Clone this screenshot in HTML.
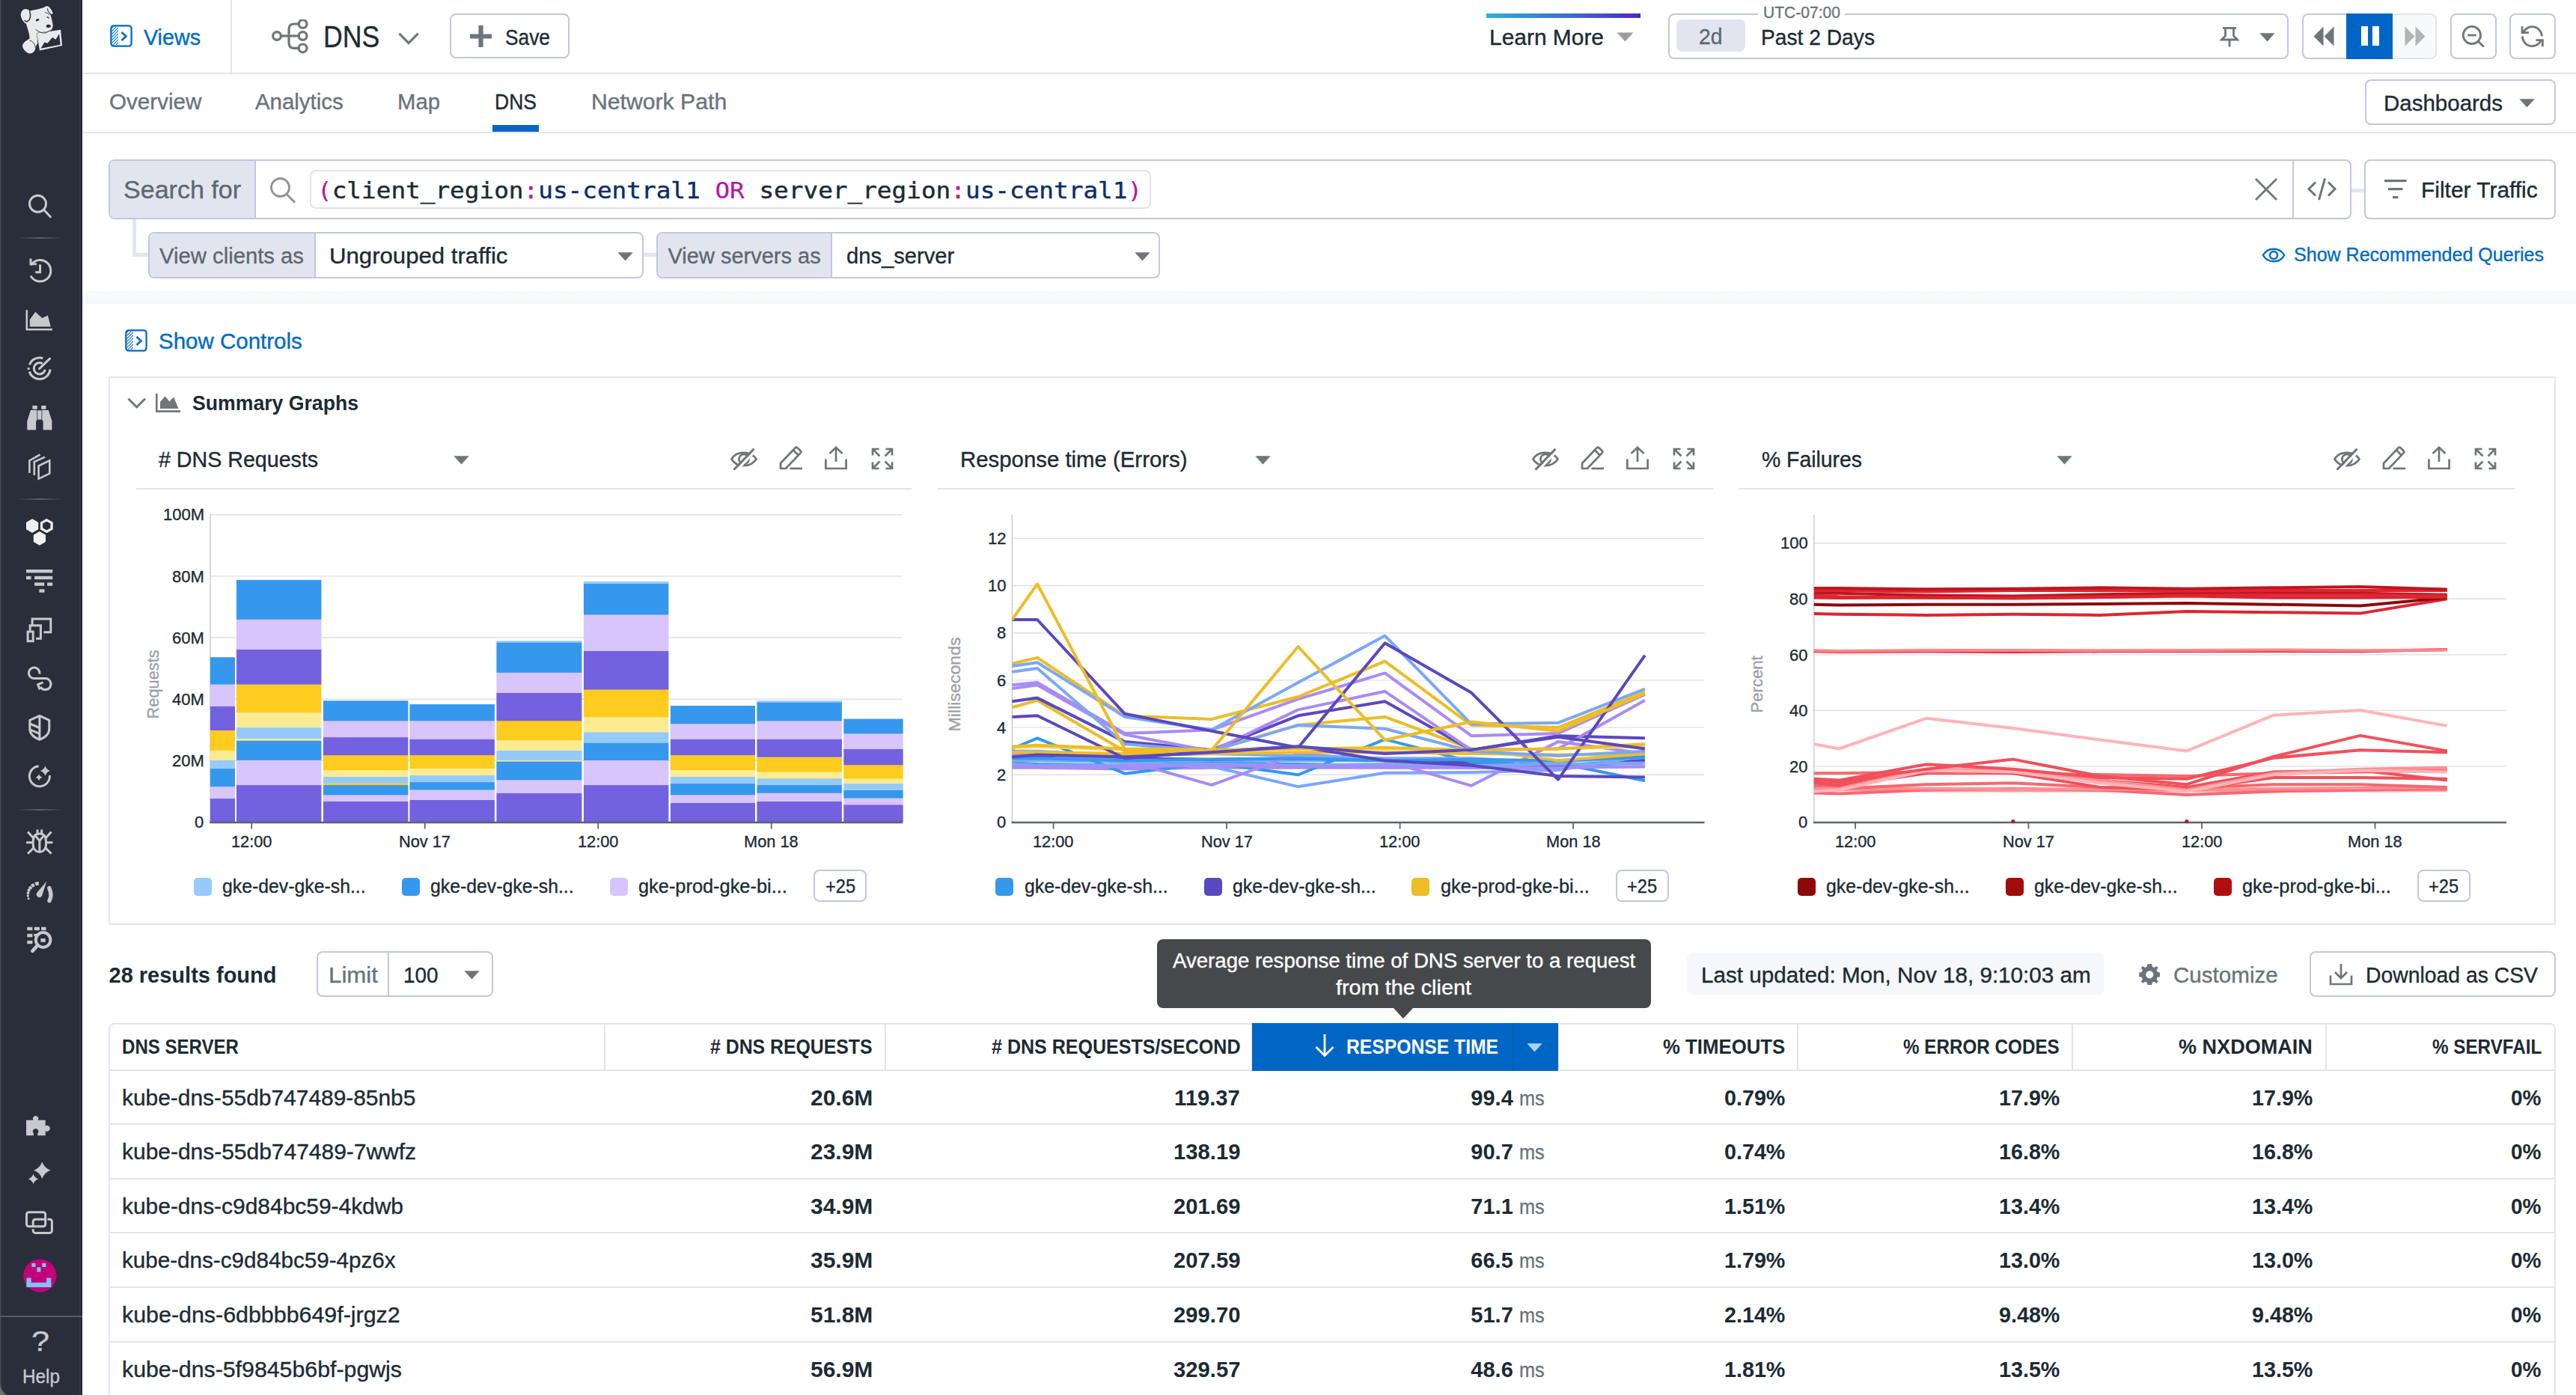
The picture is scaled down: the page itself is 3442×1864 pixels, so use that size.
<!DOCTYPE html>
<html lang="en"><head><meta charset="utf-8"><title>DNS | Datadog</title>
<style>
html,body{margin:0;padding:0}
body{width:3442px;height:1864px;position:relative;overflow:hidden;background:#fff;font-family:"Liberation Sans", sans-serif;color:#1c2b34}
.a{position:absolute;box-sizing:border-box}
.t{position:absolute;white-space:pre;line-height:1;transform-origin:0 50%}

</style></head>
<body>
<div class="a" style="left:0px;top:0px;width:110px;height:1864px;background:#2a2e3a;"></div>
<div class="a" style="left:105px;top:0px;width:5px;height:1864px;background:linear-gradient(90deg,rgba(255,255,255,0),rgba(255,255,255,.045) 30%,rgba(255,255,255,.045) 55%,rgba(0,0,0,.2) 66%,rgba(0,0,0,.22));"></div>
<svg class="a" style="left:20px;top:0px;" width="80" height="80" viewBox="0 0 1395 1395"><g fill="#e8e9eb">
<path d="M340 262 C420 225 560 225 680 170 C720 140 770 135 800 170 C850 220 880 280 885 320 C860 335 840 335 825 330 C850 420 875 500 882 590 C885 660 850 710 790 725 C760 760 700 775 640 762 L515 775 L530 1000 C500 1050 480 1100 470 1150 C450 1230 350 1270 290 1230 C200 1170 150 1080 190 1020 C220 970 280 940 340 900 C350 820 300 700 262 560 C200 520 140 440 135 350 C135 260 200 200 260 210 C300 215 330 240 340 262Z"/>
<path d="M510 775 L1065 695 L1100 1065 L575 1175Z" stroke="#2a2e3a" stroke-width="12" paint-order="stroke"/>
</g>
<g fill="#2a2e3a">
<path d="M600 1130 L690 985 L760 1005 L870 870 L950 920 L1030 790 L1058 1040Z"/>
<ellipse cx="525" cy="465" rx="42" ry="27" transform="rotate(-22 525 465)"/>
<ellipse cx="770" cy="408" rx="34" ry="14" transform="rotate(35 770 408)"/>
<ellipse cx="780" cy="608" rx="56" ry="38" transform="rotate(-8 780 608)"/>
</g>
<g fill="none" stroke="#2a2e3a" stroke-linecap="round">
<path d="M345 275 C378 380 352 470 292 498 C270 506 245 496 232 480" stroke-width="26"/>
<path d="M757 205 C765 262 792 302 838 330" stroke-width="20"/>
<path d="M700 288 C740 298 775 318 800 345" stroke-width="15"/>
<path d="M490 690 C540 742 620 772 700 766 C742 760 772 742 786 716" stroke-width="17"/>
<path d="M350 945 C420 958 462 1030 476 1100" stroke-width="17"/>
</g></svg>
<svg class="a" style="left:0px;top:0px;" width="110" height="1864" viewBox="0 0 110 1864"><g fill="none" stroke="#c8c9cc" stroke-width="3" stroke-linecap="butt" stroke-linejoin="miter"><circle cx="50.5" cy="272.3" r="11"/><path d="M58.5 280.3 L67.4 289.7" stroke-linecap="round"/><path d="M41.2 354.5 A14.3 14.3 0 1 1 41 368.6"/><path d="M41 345.4 V352.8 H48.9"/><path d="M53.6 353.6 V363.8 H47.3"/><path d="M35.8 414.3 V440.3 H69.9" stroke-width="2.6"/><path d="M39.8 436.4 V426.9 L47.3 416.7 L56.3 424.9 L63.9 421.4 L67.8 436.4Z" fill="#c8c9cc" stroke="none"/><path d="M39.5 487.4 A14.3 14.3 0 0 1 57.3 478.7"/><path d="M67.1 493.5 A14.3 14.3 0 0 1 39.2 496.5"/><circle cx="38.2" cy="492.6" r="1.7" fill="#c8c9cc" stroke="none"/><path d="M60.3 493.9 A7.6 7.6 0 1 1 56.7 485.7"/><path d="M52.6 492.6 L66.6 479.2" stroke-linecap="round"/><g fill="#c8c9cc" stroke="none"><rect x="43.4" y="542" width="6.3" height="4.8"/><rect x="55.2" y="542" width="6.3" height="4.8"/><path d="M41 548 H49.4 V561 L48.1 563.3 V574.4 H36.3 V562.5Z"/><path d="M56.3 548 H64.7 L69.4 562.5 V574.4 H57.6 V563.3 L56.3 561Z"/><rect x="50.2" y="548.3" width="5.3" height="12.3"/></g><g stroke-width="2.6"><path d="M51.6 622.5 L66.3 615.4 V632.7 L51.6 639.8Z"/><path d="M60 610.6 L45.8 617 V635"/><path d="M53.6 607.5 L39.4 615.4 V632"/></g></g><path d="M43.1 693.2 L51.2 697.9 L51.2 707.3 L43.1 712.0 L35.0 707.3 L35.0 697.9Z" fill="#f0f0f2"/><path d="M52.9 710.0 L61.0 714.7 L61.0 724.1 L52.9 728.8 L44.8 724.1 L44.8 714.7Z" fill="#f0f0f2"/><path d="M62.3 694.8 L69.1 698.7 L69.1 706.5 L62.3 710.4 L55.5 706.5 L55.5 698.7Z" fill="none" stroke="#f0f0f2" stroke-width="3.2"/><g fill="#c8c9cc"><rect x="35" y="761" width="35.2" height="4.4"/><rect x="35" y="769.8" width="6.5" height="4.4"/><rect x="46.1" y="769.8" width="24.1" height="4.4"/><rect x="46.1" y="778.4" width="13.1" height="4.4"/><rect x="63.1" y="778.4" width="7.1" height="4.4"/><rect x="52.4" y="787.3" width="7.1" height="4.4"/></g><g fill="none" stroke="#c8c9cc" stroke-width="3"><path d="M43.1 835.4 V827 H67.8 V844.8 H58.4"/><path d="M40.2 842.5 V835.8 H54.4 V853.2 H48.1"/><rect x="37.1" y="844" width="7.1" height="12.7"/><path d="M52.9 900.5 A7.3 7.3 0 1 0 45 906.6 H60.7 A7.5 7.5 0 1 1 54 917.8"/><path d="M57.5 911.8 L50.6 914.6 L53.2 921.4" stroke-linejoin="round"/><path d="M52.9 956.4 L65.8 962.3 V974 C65.8 981 60 985.5 52.9 988.3 C45.8 985.5 39.8 981 39.8 974 V962.3Z" stroke-linejoin="round"/><path d="M52.9 956.4 V988.3"/><path d="M39.8 967 L52.9 972.5 M39.8 974.9 L52.9 980.4"/><path d="M51.7 1023.8 A13.5 13.5 0 1 0 66.3 1036.0"/><path d="M60.4 1023.4999999999999 Q62.116 1028.384 67.0 1030.1 Q62.116 1031.8159999999998 60.4 1036.6999999999998 Q58.684 1031.8159999999998 53.8 1030.1 Q58.684 1028.384 60.4 1023.4999999999999Z" fill="#c8c9cc" stroke="none"/><path d="M52.1 1034.6 Q53.192 1037.7079999999999 56.300000000000004 1038.8 Q53.192 1039.892 52.1 1043.0 Q51.008 1039.892 47.9 1038.8 Q51.008 1037.7079999999999 52.1 1034.6Z" fill="#c8c9cc" stroke="none"/><path d="M44.2 1124 C44.2 1116.5 48 1113.9 52.9 1113.9 C57.8 1113.9 61.5 1116.5 61.5 1124 V1128 C61.5 1134.5 57.8 1138.4 52.9 1138.4 C48 1138.4 44.2 1134.5 44.2 1128Z"/><path d="M47 1116.6 L52.9 1123.4 L58.6 1116.6 M52.9 1123.4 V1137"/><path d="M50 1108.4 V1113.6 M55.7 1108.4 V1113.6"/><path d="M44.4 1119.6 L37.1 1111.5 M61.3 1119.6 L68.6 1111.5 M35 1125.7 H43.6 M62.1 1125.7 H70.4 M45.2 1132.6 L37.1 1140.7 M60.5 1132.6 L68.6 1140.7"/></g><circle cx="38.1" cy="1200.7" r="1.5" fill="#c8c9cc"/><circle cx="37.3" cy="1197.0" r="1.7" fill="#c8c9cc"/><circle cx="37.5" cy="1193.2" r="1.9" fill="#c8c9cc"/><circle cx="38.6" cy="1189.6" r="2.1" fill="#c8c9cc"/><circle cx="40.6" cy="1186.3" r="2.3" fill="#c8c9cc"/><path d="M42.5 1184.3 A15.6 15.6 0 0 1 45.6 1182.1" fill="none" stroke="#c8c9cc" stroke-width="4.6"/><path d="M47.1 1181.4 A15.6 15.6 0 0 1 51.8 1180.3" fill="none" stroke="#c8c9cc" stroke-width="4.8"/><path d="M65.8 1186.6 Q70 1196 66 1203.6" fill="none" stroke="#c8c9cc" stroke-width="5.4" stroke-linecap="round"/><path d="M62.3 1177.4 L56.6 1195.6 A4 4 0 1 1 49.6 1192.4Z" fill="#c8c9cc"/><g fill="#c8c9cc"><rect x="36.3" y="1238.7" width="7.1" height="4.4"/><rect x="45.8" y="1238.7" width="7.1" height="4.4"/><rect x="55.2" y="1238.7" width="6.3" height="4.4"/><rect x="36.3" y="1247.8" width="7.1" height="4.4"/><rect x="45.2" y="1247.8" width="4" height="3"/><rect x="36.3" y="1256.8" width="7.1" height="4.4"/><rect x="54.4" y="1254" width="6.3" height="4.8"/></g><circle cx="57.6" cy="1255.9" r="9.8" fill="none" stroke="#c8c9cc" stroke-width="4"/><path d="M49.6 1263.8 L43.4 1270.8" stroke="#c8c9cc" stroke-width="4.6" stroke-linecap="round"/><path d="M35 1496.8 H44.6 A3.6 3.6 0 1 1 50.6 1496.8 H60.7 V1504.6 A3.9 3.9 0 1 1 60.7 1511.2 V1517.3 H50.3 V1514.4 A3.7 3.7 0 1 0 44.9 1514.4 V1517.3 H35Z" fill="#c8c9cc"/><path d="M56.3 1552.6 Q59.211999999999996 1560.888 67.5 1563.8 Q59.211999999999996 1566.712 56.3 1575.0 Q53.388 1566.712 45.099999999999994 1563.8 Q53.388 1560.888 56.3 1552.6Z" fill="#c8c9cc"/><path d="M44.5 1568.8000000000002 Q46.216 1573.6840000000002 51.1 1575.4 Q46.216 1577.116 44.5 1582.0 Q42.784 1577.116 37.9 1575.4 Q42.784 1573.6840000000002 44.5 1568.8000000000002Z" fill="#c8c9cc"/><g fill="none" stroke="#c8c9cc" stroke-width="3"><rect x="35.5" y="1619.8" width="25.2" height="19" rx="3"/><path d="M63.5 1629.3 H66.4 A3 3 0 0 1 69.4 1632.3 V1644.4 A3 3 0 0 1 66.4 1647.4 H47.2 A3 3 0 0 1 44.2 1644.4 V1642.2"/><path d="M44.2 1638.8 V1632.3 A3 3 0 0 1 47.2 1629.3 H60.7"/></g><circle cx="53.4" cy="1704.6" r="22.2" fill="#c2007c"/><g fill="#7cc5f2"><rect x="42.4" y="1687.8" width="5.1" height="5.1"/><rect x="56.3" y="1687.8" width="5.1" height="5.1"/><rect x="49.3" y="1693.3" width="5.1" height="6.2"/><rect x="35.5" y="1707.5" width="6.2" height="12.5"/><rect x="62.1" y="1707.5" width="6.2" height="12.5"/><rect x="35.5" y="1713.8" width="32.8" height="6.2"/></g><path d="M0.6 0 V1848 A19.4 19.4 0 0 0 8.4 1864" fill="none" stroke="#4a4e5d" stroke-width="1.3"/><path d="M0 1848 A20 20 0 0 0 8 1864 L0 1864Z" fill="#6d7268"/></svg>
<div class="a" style="left:24px;top:316.8px;width:60px;height:2px;background:linear-gradient(90deg,rgba(255,255,255,0),rgba(255,255,255,.24) 50%,rgba(255,255,255,0));"></div>
<div class="a" style="left:24px;top:665.8px;width:60px;height:2px;background:linear-gradient(90deg,rgba(255,255,255,0),rgba(255,255,255,.24) 50%,rgba(255,255,255,0));"></div>
<div class="a" style="left:24px;top:1080.5px;width:60px;height:2px;background:linear-gradient(90deg,rgba(255,255,255,0),rgba(255,255,255,.24) 50%,rgba(255,255,255,0));"></div>
<div class="a" style="left:0px;top:1757.7px;width:110px;height:2px;background:#575a65;"></div>
<span class="t" style="left:42.48px;top:1773.50px;font-size:37.3px;color:#c8c9cc;-webkit-text-stroke:0.35px #c8c9cc;transform:scaleX(1.1583);">?</span>
<span class="t" style="left:30.30px;top:1826.90px;font-size:24.86px;color:#c8c9cc;-webkit-text-stroke:0.35px #c8c9cc;transform:scaleX(0.9777);">Help</span>
<div class="a" style="left:110px;top:97px;width:3332px;height:2px;background:#e3e4ee;"></div>
<svg class="a" style="left:147px;top:33px;" width="30" height="30" viewBox="0 0 30 30"><defs><clipPath id="pc147_33"><rect x="2.5" y="2.5" width="8.5" height="25"/></clipPath></defs>
<rect x="1.4" y="1.4" width="27.2" height="27.2" rx="3.5" fill="none" stroke="#006bc2" stroke-width="2.3"/>
<g clip-path="url(#pc147_33)" stroke="#006bc2" stroke-width="1.05"><path d="M-2 9 L14 -7 M-2 13 L14 -3 M-2 17 L14 1 M-2 21 L14 5 M-2 25 L14 9 M-2 29 L14 13 M-2 33 L14 17 M-2 37 L14 21 M-2 41 L14 25"/></g>
<path d="M15.5 10 L21.5 15.5 L15.5 21" fill="none" stroke="#006bc2" stroke-width="2.6"/></svg>
<span class="t" style="left:191.80px;top:36.00px;font-size:29.01px;color:#006bc2;-webkit-text-stroke:0.35px #006bc2;transform:scaleX(0.9890);">Views</span>
<div class="a" style="left:308px;top:0px;width:2px;height:97px;background:#e3e4ee;"></div>
<svg class="a" style="left:361px;top:26px;" width="52" height="48" viewBox="0 0 52 48"><g fill="none" stroke="#70757a" stroke-width="3.2">
<circle cx="9" cy="22" r="5.4"/><circle cx="43.6" cy="6" r="5.4"/><circle cx="43.6" cy="22" r="5.4"/><circle cx="43.6" cy="38.4" r="5.4"/>
<path d="M14.4 22 H38.2"/><path d="M38.2 6 H32 Q25 6 25 13 V31 Q25 38.4 32 38.4 H38.2"/></g></svg>
<span class="t" style="left:432.00px;top:27.50px;font-size:41.44px;color:#1c2b34;-webkit-text-stroke:0.35px #1c2b34;transform:scaleX(0.8606);">DNS</span>
<svg class="a" style="left:531px;top:42px;" width="30" height="20" viewBox="0 0 30 20"><path d="M2.5 2.8 L15 15.5 L27.5 2.8" fill="none" stroke="#70757a" stroke-width="3.2"/></svg>
<div class="a" style="left:601px;top:18px;width:160px;height:60px;background:#fff;border:2px solid #c3c7de;border-radius:8px;"></div>
<svg class="a" style="left:628px;top:34px;" width="29" height="29" viewBox="0 0 29 29"><path d="M14.5 0 V29 M0 14.5 H29" stroke="#70757a" stroke-width="6.2" fill="none"/></svg>
<span class="t" style="left:675.40px;top:35.50px;font-size:29.01px;color:#1c2b34;-webkit-text-stroke:0.35px #1c2b34;transform:scaleX(0.9076);">Save</span>
<div class="a" style="left:1986px;top:18px;width:206px;height:6px;background:linear-gradient(90deg,#2bb3d9,#3d6fd6 50%,#4a2bc3);"></div>
<span class="t" style="left:1989.50px;top:36.00px;font-size:29.01px;color:#1c2b34;-webkit-text-stroke:0.35px #1c2b34;transform:scaleX(1.0316);">Learn More</span>
<svg class="a" style="left:2160px;top:43px;" width="23" height="13" viewBox="0 0 23 13"><path d="M0.5 0.5 H22.5 L11.5 12.5 Z" fill="#9a9da1"/></svg>
<div class="a" style="left:2229px;top:18px;width:829px;height:61px;background:#fff;border:2px solid #c3c7de;border-radius:8px;"></div>
<div class="a" style="left:2349px;top:16px;width:116px;height:6px;background:#fff;"></div>
<span class="t" style="left:2355.50px;top:4.80px;font-size:22.79px;color:#6a737c;-webkit-text-stroke:0.35px #6a737c;transform:scaleX(0.9244);">UTC-07:00</span>
<div class="a" style="left:2240px;top:26px;width:92px;height:43px;background:#e2e5f0;border-radius:8px;"></div>
<span class="t" style="left:2270.00px;top:35.30px;font-size:29.01px;color:#5d6873;-webkit-text-stroke:0.35px #5d6873;transform:scaleX(0.9763);">2d</span>
<span class="t" style="left:2353.00px;top:36.00px;font-size:29.01px;color:#1c2b34;-webkit-text-stroke:0.35px #1c2b34;transform:scaleX(0.9722);">Past 2 Days</span>
<svg class="a" style="left:2966px;top:36px;" width="26" height="27" viewBox="0 0 26 27"><g fill="none" stroke="#70757a" stroke-width="2.8"><path d="M4 1.5 H22"/><path d="M7.5 1.5 V12 L2.5 17 H23.5 L18.5 12 V1.5"/><path d="M13 17 V26.5"/></g></svg>
<svg class="a" style="left:3019px;top:44px;" width="21" height="12" viewBox="0 0 21 12"><path d="M0.3 0.3 H20.7 L10.5 11.5 Z" fill="#70757a"/></svg>
<div class="a" style="left:3076px;top:18px;width:62px;height:61px;background:#fff;border:2px solid #c3c7de;border-radius:8px 0 0 8px;"></div>
<div class="a" style="left:3195px;top:18px;width:61px;height:61px;background:#f8f9fb;border:2px solid #e3e5ee;border-radius:0 8px 8px 0;"></div>
<div class="a" style="left:3135px;top:18px;width:62px;height:61px;background:#0066c6;"></div>
<svg class="a" style="left:3091px;top:35px;" width="28" height="27" viewBox="0 0 28 27"><path d="M13.5 0.5 V26.5 L0.5 13.5 Z M27.5 0.5 V26.5 L14.5 13.5 Z" fill="#70757a"/></svg>
<div class="a" style="left:3154.5px;top:35px;width:9px;height:26px;background:#fff;"></div>
<div class="a" style="left:3169.7px;top:35px;width:9px;height:26px;background:#fff;"></div>
<svg class="a" style="left:3213px;top:35px;" width="28" height="27" viewBox="0 0 28 27"><path d="M0.5 0.5 V26.5 L13.5 13.5 Z M14.5 0.5 V26.5 L27.5 13.5 Z" fill="#b1b4b8"/></svg>
<div class="a" style="left:3274px;top:18px;width:62px;height:61px;background:#fff;border:2px solid #c3c7de;border-radius:8px;"></div>
<svg class="a" style="left:3287px;top:32px;" width="36" height="36" viewBox="0 0 36 36"><g fill="none" stroke="#70757a" stroke-width="2.8"><circle cx="15.9" cy="15" r="11.6"/><path d="M10.2 15 H21.8"/><path d="M24.6 23.4 L31.8 30.6"/></g></svg>
<div class="a" style="left:3353px;top:18px;width:62px;height:61px;background:#fff;border:2px solid #c3c7de;border-radius:8px;"></div>
<svg class="a" style="left:3367px;top:32px;" width="34" height="34" viewBox="0 0 34 34"><g fill="none" stroke="#70757a" stroke-width="2.8"><path d="M4.2 12.2 A13 13 0 0 1 29.4 16.6"/><path d="M3.4 16.6 A13 13 0 0 0 28.2 22.1"/><path d="M3 3.2 V11.7 H11.9"/><path d="M21.4 21.6 H30.3 V30.2"/></g></svg>
<div class="a" style="left:110px;top:176px;width:3332px;height:2px;background:#e3e4ee;"></div>
<span class="t" style="left:146.10px;top:122.20px;font-size:29.01px;color:#6a737c;-webkit-text-stroke:0.35px #6a737c;transform:scaleX(1.0218);">Overview</span>
<span class="t" style="left:341.00px;top:122.20px;font-size:29.01px;color:#6a737c;-webkit-text-stroke:0.35px #6a737c;transform:scaleX(1.0142);">Analytics</span>
<span class="t" style="left:531.30px;top:122.20px;font-size:29.01px;color:#6a737c;-webkit-text-stroke:0.35px #6a737c;transform:scaleX(1.0102);">Map</span>
<span class="t" style="left:661.30px;top:122.20px;font-size:29.01px;color:#1c2b34;-webkit-text-stroke:0.35px #1c2b34;transform:scaleX(0.9145);">DNS</span>
<span class="t" style="left:789.80px;top:122.20px;font-size:29.01px;color:#6a737c;-webkit-text-stroke:0.35px #6a737c;transform:scaleX(1.0409);">Network Path</span>
<div class="a" style="left:658px;top:167px;width:62px;height:9px;background:#0a66c2;"></div>
<div class="a" style="left:3160px;top:106.3px;width:255px;height:60.7px;background:#fff;border:2px solid #c3c7de;border-radius:8px;"></div>
<span class="t" style="left:3185.00px;top:123.50px;font-size:29.01px;color:#1c2b34;-webkit-text-stroke:0.35px #1c2b34;transform:scaleX(1.0168);">Dashboards</span>
<svg class="a" style="left:3366px;top:132.3px;" width="21" height="12" viewBox="0 0 21 12"><path d="M0.3 0.3 H20.7 L10.5 11.5 Z" fill="#70757a"/></svg>
<div class="a" style="left:176.5px;top:292px;width:5px;height:50.5px;background:#e3e5f0;"></div>
<div class="a" style="left:176.5px;top:337.5px;width:23px;height:5px;background:#e3e5f0;"></div>
<div class="a" style="left:859px;top:337.5px;width:20px;height:5px;background:#e3e5f0;"></div>
<div class="a" style="left:3141px;top:251.5px;width:19px;height:5px;background:#e3e5f0;"></div>
<div class="a" style="left:145px;top:213px;width:2997px;height:80px;background:#fff;border:2px solid #c3c7de;border-radius:8px;"></div>
<div class="a" style="left:147px;top:215px;width:194px;height:76px;background:#e2e5f0;border-radius:6px 0 0 6px;"></div>
<div class="a" style="left:340px;top:215px;width:2px;height:76px;background:#c3c7de;"></div>
<span class="t" style="left:164.90px;top:237.00px;font-size:33.15px;color:#5d6873;-webkit-text-stroke:0.35px #5d6873;transform:scaleX(1.0269);">Search for</span>
<svg class="a" style="left:360px;top:236px;" width="37" height="36" viewBox="0 0 37 36"><g fill="none" stroke="#8e949a" stroke-width="2.8"><circle cx="14.5" cy="14.5" r="12"/><path d="M23 23.5 L34 34.5"/></g></svg>
<div class="a" style="left:414px;top:227px;width:1124px;height:52px;background:#fff;border:2px solid #e1e3ec;border-radius:8px;"></div>
<span class="t" style="left:423.5px;top:240px;font-size:30px;font-family:'DejaVu Sans Mono', 'Liberation Mono', monospace;transform:scaleX(1.0896);"><span style="color:#b5179e;-webkit-text-stroke:0.15px #b5179e">(</span><span style="color:#1c2b34;-webkit-text-stroke:0.4px #1c2b34">client_region</span><span style="color:#c2188f;-webkit-text-stroke:0.4px #c2188f">:</span><span style="color:#0b2d6b;-webkit-text-stroke:0.4px #0b2d6b">us-central1</span><span style="color:#1c2b34;-webkit-text-stroke:0.4px #1c2b34"> </span><span style="color:#b5179e;-webkit-text-stroke:0.15px #b5179e">OR</span><span style="color:#1c2b34;-webkit-text-stroke:0.4px #1c2b34"> </span><span style="color:#1c2b34;-webkit-text-stroke:0.4px #1c2b34">server_region</span><span style="color:#c2188f;-webkit-text-stroke:0.4px #c2188f">:</span><span style="color:#0b2d6b;-webkit-text-stroke:0.4px #0b2d6b">us-central1</span><span style="color:#b5179e;-webkit-text-stroke:0.15px #b5179e">)</span></span>
<svg class="a" style="left:3012px;top:237px;" width="32" height="32" viewBox="0 0 32 32"><path d="M2 2 L30 30 M30 2 L2 30" fill="none" stroke="#70757a" stroke-width="2.8"/></svg>
<div class="a" style="left:3063px;top:215px;width:2px;height:76px;background:#c3c7de;"></div>
<svg class="a" style="left:3082px;top:237px;" width="42" height="32" viewBox="0 0 42 32"><g fill="none" stroke="#70757a" stroke-width="3"><path d="M12 6.5 L3 15.5 L12 24.5"/><path d="M29 6.5 L38 15.5 L29 24.5"/><path d="M24.5 1.5 L16.5 30"/></g></svg>
<div class="a" style="left:3159px;top:213px;width:256px;height:80px;background:#fff;border:2px solid #c3c7de;border-radius:8px;"></div>
<svg class="a" style="left:3186px;top:240px;" width="30" height="26" viewBox="0 0 30 26"><g fill="#70757a"><rect x="0" y="0" width="29.5" height="3.2"/><rect x="5" y="11" width="19.5" height="3.2"/><rect x="11" y="22" width="7.5" height="3.2"/></g></svg>
<span class="t" style="left:3234.50px;top:239.60px;font-size:29.01px;color:#1c2b34;-webkit-text-stroke:0.35px #1c2b34;transform:scaleX(1.0316);">Filter Traffic</span>
<div class="a" style="left:198px;top:309.7px;width:662px;height:62px;background:#fff;border:2px solid #c3c7de;border-radius:8px;"></div>
<div class="a" style="left:200px;top:311.7px;width:221px;height:58px;background:#e2e5f0;border-radius:6px 0 0 6px;"></div>
<div class="a" style="left:420px;top:311.7px;width:2px;height:58px;background:#c3c7de;"></div>
<span class="t" style="left:213.00px;top:327.70px;font-size:29.01px;color:#5d6873;-webkit-text-stroke:0.35px #5d6873;transform:scaleX(1.0090);">View clients as</span>
<span class="t" style="left:440.00px;top:327.70px;font-size:29.01px;color:#1c2b34;-webkit-text-stroke:0.35px #1c2b34;transform:scaleX(1.0742);">Ungrouped traffic</span>
<svg class="a" style="left:825px;top:337px;" width="21" height="12" viewBox="0 0 21 12"><path d="M0.3 0.3 H20.7 L10.5 11.5 Z" fill="#70757a"/></svg>
<div class="a" style="left:877px;top:309.7px;width:673px;height:62px;background:#fff;border:2px solid #c3c7de;border-radius:8px;"></div>
<div class="a" style="left:879px;top:311.7px;width:232px;height:58px;background:#e2e5f0;border-radius:6px 0 0 6px;"></div>
<div class="a" style="left:1110px;top:311.7px;width:2px;height:58px;background:#c3c7de;"></div>
<span class="t" style="left:892.50px;top:327.70px;font-size:29.01px;color:#5d6873;-webkit-text-stroke:0.35px #5d6873;">View servers as</span>
<span class="t" style="left:1130.80px;top:327.70px;font-size:29.01px;color:#1c2b34;-webkit-text-stroke:0.35px #1c2b34;transform:scaleX(1.0051);">dns_server</span>
<svg class="a" style="left:1516px;top:337px;" width="21" height="12" viewBox="0 0 21 12"><path d="M0.3 0.3 H20.7 L10.5 11.5 Z" fill="#70757a"/></svg>
<svg class="a" style="left:3022px;top:329px;" width="32" height="24" viewBox="0 0 32 24"><g fill="none" stroke="#006bc2" stroke-width="2.5"><path d="M1.8 12 C8 1 24 1 30.2 12 C24 23 8 23 1.8 12 Z"/><circle cx="16" cy="12" r="5"/></g></svg>
<span class="t" style="left:3064.70px;top:328.30px;font-size:24.86px;color:#006bc2;-webkit-text-stroke:0.35px #006bc2;transform:scaleX(1.0072);">Show Recommended Queries</span>
<div class="a" style="left:110px;top:389px;width:3332px;height:17px;background:linear-gradient(180deg,#f9fafb,#f6f7f9);"></div>
<svg class="a" style="left:167px;top:439.5px;" width="30" height="30" viewBox="0 0 30 30"><defs><clipPath id="pc167_439"><rect x="2.5" y="2.5" width="8.5" height="25"/></clipPath></defs>
<rect x="1.4" y="1.4" width="27.2" height="27.2" rx="3.5" fill="none" stroke="#006bc2" stroke-width="2.3"/>
<g clip-path="url(#pc167_439)" stroke="#006bc2" stroke-width="1.05"><path d="M-2 9 L14 -7 M-2 13 L14 -3 M-2 17 L14 1 M-2 21 L14 5 M-2 25 L14 9 M-2 29 L14 13 M-2 33 L14 17 M-2 37 L14 21 M-2 41 L14 25"/></g>
<path d="M15.5 10 L21.5 15.5 L15.5 21" fill="none" stroke="#006bc2" stroke-width="2.6"/></svg>
<span class="t" style="left:212.40px;top:441.60px;font-size:29.01px;color:#006bc2;-webkit-text-stroke:0.35px #006bc2;transform:scaleX(1.0170);">Show Controls</span>
<div class="a" style="left:145px;top:503px;width:3270px;height:732.6px;background:#fff;border:2px solid #e3e4ee;"></div>
<svg class="a" style="left:169px;top:530px;" width="28" height="18" viewBox="0 0 28 18"><path d="M2.5 2.8 L13.7 14 L25 2.8" fill="none" stroke="#70757a" stroke-width="3"/></svg>
<svg class="a" style="left:208px;top:526px;" width="33" height="25" viewBox="0 0 33 25"><path d="M1.3 0 V23.6 H33" fill="none" stroke="#70757a" stroke-width="2.6"/><path d="M6 20 V11 L12.5 3.5 L18.5 10.5 L24 4.5 L30.5 20 Z" fill="#70757a"/></svg>
<span class="t" style="left:257.40px;top:525.70px;font-size:26.94px;color:#1c2b34;font-weight:700;transform:scaleX(0.9886);">Summary Graphs</span>
<span class="t" style="left:211.60px;top:599.50px;font-size:29.01px;color:#1c2b34;-webkit-text-stroke:0.35px #1c2b34;transform:scaleX(0.9870);"># DNS Requests</span>
<svg class="a" style="left:605.6px;top:608.5px;" width="21" height="12" viewBox="0 0 21 12"><path d="M0.3 0.3 H20.7 L10.5 11.5 Z" fill="#70757a"/></svg>
<svg class="a" style="left:974.6px;top:597px;" width="38" height="32" viewBox="0 0 38 32"><g fill="none" stroke="#70757a" stroke-width="2.7"><path d="M2.5 16.5 C9 5 28 5 35.5 16.5 C28 28 9 28 2.5 16.5 Z"/><circle cx="19" cy="16.5" r="6.6"/><path d="M8.2 32.6 L35.2 4.6" stroke="#fff" stroke-width="3.2"/><path d="M5.5 30.8 L32.5 2.8" stroke-width="3"/></g></svg>
<svg class="a" style="left:1039.6px;top:595px;" width="34" height="34" viewBox="0 0 34 34"><g fill="none" stroke="#70757a" stroke-width="2.7" stroke-linejoin="round"><path d="M3 24 L22.5 3.5 Q24 2 25.6 3.5 L29.5 7.2 Q31 8.8 29.5 10.4 L10 31 H3 Z"/><path d="M20 6.5 L27 13.5"/><path d="M15.5 31 H32"/></g></svg>
<svg class="a" style="left:1100.6px;top:595px;" width="32" height="34" viewBox="0 0 32 34"><g fill="none" stroke="#70757a" stroke-width="2.7"><path d="M16 22 V3.5"/><path d="M7.5 11 L16 2.8 L24.5 11"/><path d="M2.4 18.5 V31 H29.6 V18.5"/></g></svg>
<svg class="a" style="left:1163.6px;top:598px;" width="30" height="30" viewBox="0 0 30 30"><g fill="none" stroke="#70757a" stroke-width="2.7"><path d="M2 10.5 V2 H10.5 M2.5 2.5 L11.5 11.5"/><path d="M28 10.5 V2 H19.5 M27.5 2.5 L18.5 11.5"/><path d="M2 19.5 V28 H10.5 M2.5 27.5 L11.5 18.5"/><path d="M28 19.5 V28 H19.5 M27.5 27.5 L18.5 18.5"/></g></svg>
<div class="a" style="left:181.6px;top:651.8px;width:1036px;height:2px;background:#e3e4ee;"></div>
<span class="t" style="left:155.97px;top:903.11px;font-size:22.79px;color:#9b9fa4;-webkit-text-stroke:0.35px #9b9fa4;transform:rotate(-90deg) scaleX(0.9558);transform-origin:50% 50%;">Requests</span>
<span class="t" style="left:260.47px;top:1087.20px;font-size:22.79px;color:#1c2b34;-webkit-text-stroke:0.35px #1c2b34;transform:scaleX(0.9653);">0</span>
<span class="t" style="left:229.91px;top:1005.04px;font-size:22.79px;color:#1c2b34;-webkit-text-stroke:0.35px #1c2b34;transform:scaleX(0.9653);">20M</span>
<span class="t" style="left:229.91px;top:922.88px;font-size:22.79px;color:#1c2b34;-webkit-text-stroke:0.35px #1c2b34;transform:scaleX(0.9653);">40M</span>
<span class="t" style="left:229.91px;top:840.72px;font-size:22.79px;color:#1c2b34;-webkit-text-stroke:0.35px #1c2b34;transform:scaleX(0.9653);">60M</span>
<span class="t" style="left:229.91px;top:758.56px;font-size:22.79px;color:#1c2b34;-webkit-text-stroke:0.35px #1c2b34;transform:scaleX(0.9653);">80M</span>
<span class="t" style="left:217.68px;top:676.40px;font-size:22.79px;color:#1c2b34;-webkit-text-stroke:0.35px #1c2b34;transform:scaleX(0.9653);">100M</span>
<span class="t" style="left:308.96px;top:1113.00px;font-size:22.79px;color:#1c2b34;-webkit-text-stroke:0.35px #1c2b34;transform:scaleX(0.9556);">12:00</span>
<span class="t" style="left:533.21px;top:1113.00px;font-size:22.79px;color:#1c2b34;-webkit-text-stroke:0.35px #1c2b34;transform:scaleX(0.9556);">Nov 17</span>
<span class="t" style="left:771.96px;top:1113.00px;font-size:22.79px;color:#1c2b34;-webkit-text-stroke:0.35px #1c2b34;transform:scaleX(0.9556);">12:00</span>
<span class="t" style="left:994.39px;top:1113.00px;font-size:22.79px;color:#1c2b34;-webkit-text-stroke:0.35px #1c2b34;transform:scaleX(0.9556);">Mon 18</span>
<div class="a" style="left:258.9px;top:1173px;width:24px;height:24px;background:#95cbfb;border-radius:5px;"></div>
<span class="t" style="left:297.20px;top:1171.50px;font-size:25.9px;color:#1c2b34;-webkit-text-stroke:0.35px #1c2b34;transform:scaleX(0.9579);">gke-dev-gke-sh...</span>
<div class="a" style="left:537.2px;top:1173px;width:24px;height:24px;background:#3598ec;border-radius:5px;"></div>
<span class="t" style="left:575.20px;top:1171.50px;font-size:25.9px;color:#1c2b34;-webkit-text-stroke:0.35px #1c2b34;transform:scaleX(0.9579);">gke-dev-gke-sh...</span>
<div class="a" style="left:815px;top:1173px;width:24px;height:24px;background:#d6c5fb;border-radius:5px;"></div>
<span class="t" style="left:853.20px;top:1171.50px;font-size:25.9px;color:#1c2b34;-webkit-text-stroke:0.35px #1c2b34;transform:scaleX(0.9798);">gke-prod-gke-bi...</span>
<div class="a" style="left:1087.1px;top:1162px;width:71px;height:43px;background:#fff;border:2px solid #c3c7de;border-radius:8px;"></div>
<span class="t" style="left:1102.60px;top:1171.50px;font-size:25.9px;color:#1c2b34;-webkit-text-stroke:0.35px #1c2b34;transform:scaleX(0.9107);">+25</span>
<svg class="a" style="left:0px;top:0px;pointer-events:none;" width="3442" height="1864" viewBox="0 0 3442 1864"><path d="M281.0 1016.3 H1206.1" stroke="#dfe0e5" stroke-width="1.4"/><path d="M281.0 934.2 H1206.1" stroke="#dfe0e5" stroke-width="1.4"/><path d="M281.0 852.0 H1206.1" stroke="#dfe0e5" stroke-width="1.4"/><path d="M281.0 769.9 H1206.1" stroke="#dfe0e5" stroke-width="1.4"/><path d="M281.0 687.7 H1206.1" stroke="#dfe0e5" stroke-width="1.4"/><path d="M281.0 687.7 V1098.5" stroke="#c9cad0" stroke-width="1.4"/><rect x="280.9" y="1066.8" width="33.1" height="32.0" fill="#7361e0"/><rect x="280.9" y="1050.7" width="33.1" height="16.4" fill="#d7c5fb"/><rect x="280.9" y="1026.9" width="33.1" height="24.2" fill="#3598ec"/><rect x="280.9" y="1015.7" width="33.1" height="11.5" fill="#95cbfb"/><rect x="280.9" y="1002.5" width="33.1" height="13.5" fill="#fdeb92"/><rect x="280.9" y="975.7" width="33.1" height="27.1" fill="#fecb1f"/><rect x="280.9" y="943.5" width="33.1" height="32.5" fill="#7361e0"/><rect x="280.9" y="914.3" width="33.1" height="29.5" fill="#d7c5fb"/><rect x="280.9" y="878.2" width="33.1" height="36.4" fill="#3598ec"/><rect x="315.9" y="1048.8" width="113.5" height="50.0" fill="#7361e0"/><rect x="315.9" y="1015.7" width="113.5" height="33.4" fill="#d7c5fb"/><rect x="315.9" y="989.3" width="113.5" height="26.6" fill="#3598ec"/><rect x="315.9" y="986.9" width="113.5" height="2.7" fill="#fdeb92"/><rect x="315.9" y="971.8" width="113.5" height="15.4" fill="#95cbfb"/><rect x="315.9" y="951.8" width="113.5" height="20.3" fill="#fdeb92"/><rect x="315.9" y="914.3" width="113.5" height="37.8" fill="#fecb1f"/><rect x="315.9" y="867.5" width="113.5" height="47.1" fill="#7361e0"/><rect x="315.9" y="827.5" width="113.5" height="40.3" fill="#d7c5fb"/><rect x="315.9" y="774.9" width="113.5" height="52.9" fill="#3598ec"/><rect x="431.9" y="1070.7" width="113.5" height="28.1" fill="#7361e0"/><rect x="431.9" y="1061.9" width="113.5" height="9.1" fill="#d7c5fb"/><rect x="431.9" y="1048.8" width="113.5" height="13.5" fill="#3598ec"/><rect x="431.9" y="1046.4" width="113.5" height="2.7" fill="#fecb1f"/><rect x="431.9" y="1037.6" width="113.5" height="9.1" fill="#95cbfb"/><rect x="431.9" y="1028.8" width="113.5" height="9.1" fill="#fdeb92"/><rect x="431.9" y="1008.8" width="113.5" height="20.3" fill="#fecb1f"/><rect x="431.9" y="985.0" width="113.5" height="24.2" fill="#7361e0"/><rect x="431.9" y="963.0" width="113.5" height="22.2" fill="#d7c5fb"/><rect x="431.9" y="936.2" width="113.5" height="27.1" fill="#3598ec"/><rect x="547.4" y="1068.8" width="113.5" height="30.0" fill="#7361e0"/><rect x="547.4" y="1055.1" width="113.5" height="13.9" fill="#d7c5fb"/><rect x="547.4" y="1044.9" width="113.5" height="10.5" fill="#3598ec"/><rect x="547.4" y="1035.6" width="113.5" height="9.6" fill="#95cbfb"/><rect x="547.4" y="1026.9" width="113.5" height="9.1" fill="#fdeb92"/><rect x="547.4" y="1008.8" width="113.5" height="18.3" fill="#fecb1f"/><rect x="547.4" y="987.4" width="113.5" height="21.7" fill="#7361e0"/><rect x="547.4" y="963.0" width="113.5" height="24.7" fill="#d7c5fb"/><rect x="547.4" y="941.1" width="113.5" height="22.2" fill="#3598ec"/><rect x="663.4" y="1059.5" width="114.0" height="39.3" fill="#7361e0"/><rect x="663.4" y="1042.0" width="114.0" height="17.8" fill="#d7c5fb"/><rect x="663.4" y="1017.1" width="114.0" height="25.2" fill="#3598ec"/><rect x="663.4" y="1015.7" width="114.0" height="1.8" fill="#fdeb92"/><rect x="663.4" y="1002.5" width="114.0" height="13.5" fill="#95cbfb"/><rect x="663.4" y="988.8" width="114.0" height="13.9" fill="#fdeb92"/><rect x="663.4" y="963.0" width="114.0" height="26.1" fill="#fecb1f"/><rect x="663.4" y="925.5" width="114.0" height="37.8" fill="#7361e0"/><rect x="663.4" y="898.7" width="114.0" height="27.1" fill="#d7c5fb"/><rect x="663.4" y="858.2" width="114.0" height="40.7" fill="#3598ec"/><rect x="663.4" y="856.3" width="114.0" height="2.2" fill="#95cbfb"/><rect x="779.9" y="1048.8" width="113.5" height="50.0" fill="#7361e0"/><rect x="779.9" y="1015.7" width="113.5" height="33.4" fill="#d7c5fb"/><rect x="779.9" y="992.3" width="113.5" height="23.7" fill="#3598ec"/><rect x="779.9" y="978.1" width="113.5" height="14.4" fill="#95cbfb"/><rect x="779.9" y="958.1" width="113.5" height="20.3" fill="#fdeb92"/><rect x="779.9" y="921.1" width="113.5" height="37.3" fill="#fecb1f"/><rect x="779.9" y="869.5" width="113.5" height="52.0" fill="#7361e0"/><rect x="779.9" y="821.2" width="113.5" height="48.5" fill="#d7c5fb"/><rect x="779.9" y="779.8" width="113.5" height="41.7" fill="#3598ec"/><rect x="779.9" y="776.9" width="113.5" height="3.2" fill="#95cbfb"/><rect x="895.9" y="1072.7" width="113.1" height="26.1" fill="#7361e0"/><rect x="895.9" y="1061.9" width="113.1" height="11.0" fill="#d7c5fb"/><rect x="895.9" y="1046.8" width="113.1" height="15.4" fill="#3598ec"/><rect x="895.9" y="1037.6" width="113.1" height="9.6" fill="#95cbfb"/><rect x="895.9" y="1028.8" width="113.1" height="9.1" fill="#fdeb92"/><rect x="895.9" y="1008.8" width="113.1" height="20.3" fill="#fecb1f"/><rect x="895.9" y="987.4" width="113.1" height="21.7" fill="#7361e0"/><rect x="895.9" y="966.9" width="113.1" height="20.8" fill="#d7c5fb"/><rect x="895.9" y="943.0" width="113.1" height="24.2" fill="#3598ec"/><rect x="1011.4" y="1070.7" width="113.5" height="28.1" fill="#7361e0"/><rect x="1011.4" y="1059.5" width="113.5" height="11.5" fill="#d7c5fb"/><rect x="1011.4" y="1048.8" width="113.5" height="11.0" fill="#3598ec"/><rect x="1011.4" y="1040.0" width="113.5" height="9.1" fill="#95cbfb"/><rect x="1011.4" y="1031.2" width="113.5" height="9.1" fill="#fdeb92"/><rect x="1011.4" y="1011.3" width="113.5" height="20.3" fill="#fecb1f"/><rect x="1011.4" y="987.4" width="113.5" height="24.2" fill="#7361e0"/><rect x="1011.4" y="963.0" width="113.5" height="24.7" fill="#d7c5fb"/><rect x="1011.4" y="938.2" width="113.5" height="25.2" fill="#3598ec"/><rect x="1011.4" y="936.2" width="113.5" height="2.2" fill="#95cbfb"/><rect x="1127.3" y="1075.1" width="79.4" height="23.7" fill="#7361e0"/><rect x="1127.3" y="1066.3" width="79.4" height="9.1" fill="#d7c5fb"/><rect x="1127.3" y="1055.6" width="79.4" height="11.0" fill="#3598ec"/><rect x="1127.3" y="1046.8" width="79.4" height="9.1" fill="#95cbfb"/><rect x="1127.3" y="1040.0" width="79.4" height="7.1" fill="#fdeb92"/><rect x="1127.3" y="1022.0" width="79.4" height="18.3" fill="#fecb1f"/><rect x="1127.3" y="1000.5" width="79.4" height="21.7" fill="#7361e0"/><rect x="1127.3" y="980.1" width="79.4" height="20.8" fill="#d7c5fb"/><rect x="1127.3" y="960.6" width="79.4" height="19.8" fill="#3598ec"/><path d="M280.2 1099.0 H1206.1" stroke="#5c6370" stroke-width="2.4"/><path d="M336.2 1099.0 V1107.5" stroke="#5c6370" stroke-width="1.8"/><path d="M567.7 1099.0 V1107.5" stroke="#5c6370" stroke-width="1.8"/><path d="M799.2 1099.0 V1107.5" stroke="#5c6370" stroke-width="1.8"/><path d="M1030.7 1099.0 V1107.5" stroke="#5c6370" stroke-width="1.8"/></svg>
<span class="t" style="left:1283.00px;top:599.50px;font-size:29.01px;color:#1c2b34;-webkit-text-stroke:0.35px #1c2b34;transform:scaleX(1.0125);">Response time (Errors)</span>
<svg class="a" style="left:1677px;top:608.5px;" width="21" height="12" viewBox="0 0 21 12"><path d="M0.3 0.3 H20.7 L10.5 11.5 Z" fill="#70757a"/></svg>
<svg class="a" style="left:2046px;top:597px;" width="38" height="32" viewBox="0 0 38 32"><g fill="none" stroke="#70757a" stroke-width="2.7"><path d="M2.5 16.5 C9 5 28 5 35.5 16.5 C28 28 9 28 2.5 16.5 Z"/><circle cx="19" cy="16.5" r="6.6"/><path d="M8.2 32.6 L35.2 4.6" stroke="#fff" stroke-width="3.2"/><path d="M5.5 30.8 L32.5 2.8" stroke-width="3"/></g></svg>
<svg class="a" style="left:2111px;top:595px;" width="34" height="34" viewBox="0 0 34 34"><g fill="none" stroke="#70757a" stroke-width="2.7" stroke-linejoin="round"><path d="M3 24 L22.5 3.5 Q24 2 25.6 3.5 L29.5 7.2 Q31 8.8 29.5 10.4 L10 31 H3 Z"/><path d="M20 6.5 L27 13.5"/><path d="M15.5 31 H32"/></g></svg>
<svg class="a" style="left:2172px;top:595px;" width="32" height="34" viewBox="0 0 32 34"><g fill="none" stroke="#70757a" stroke-width="2.7"><path d="M16 22 V3.5"/><path d="M7.5 11 L16 2.8 L24.5 11"/><path d="M2.4 18.5 V31 H29.6 V18.5"/></g></svg>
<svg class="a" style="left:2235px;top:598px;" width="30" height="30" viewBox="0 0 30 30"><g fill="none" stroke="#70757a" stroke-width="2.7"><path d="M2 10.5 V2 H10.5 M2.5 2.5 L11.5 11.5"/><path d="M28 10.5 V2 H19.5 M27.5 2.5 L18.5 11.5"/><path d="M2 19.5 V28 H10.5 M2.5 27.5 L11.5 18.5"/><path d="M28 19.5 V28 H19.5 M27.5 27.5 L18.5 18.5"/></g></svg>
<div class="a" style="left:1253px;top:651.8px;width:1036px;height:2px;background:#e3e4ee;"></div>
<span class="t" style="left:1213.46px;top:903.11px;font-size:22.79px;color:#9b9fa4;-webkit-text-stroke:0.35px #9b9fa4;transform:rotate(-90deg) scaleX(1.0155);transform-origin:50% 50%;">Milliseconds</span>
<span class="t" style="left:1331.87px;top:1087.20px;font-size:22.79px;color:#1c2b34;-webkit-text-stroke:0.35px #1c2b34;transform:scaleX(0.9653);">0</span>
<span class="t" style="left:1331.87px;top:1024.00px;font-size:22.79px;color:#1c2b34;-webkit-text-stroke:0.35px #1c2b34;transform:scaleX(0.9653);">2</span>
<span class="t" style="left:1331.87px;top:960.80px;font-size:22.79px;color:#1c2b34;-webkit-text-stroke:0.35px #1c2b34;transform:scaleX(0.9653);">4</span>
<span class="t" style="left:1331.87px;top:897.60px;font-size:22.79px;color:#1c2b34;-webkit-text-stroke:0.35px #1c2b34;transform:scaleX(0.9653);">6</span>
<span class="t" style="left:1331.87px;top:834.40px;font-size:22.79px;color:#1c2b34;-webkit-text-stroke:0.35px #1c2b34;transform:scaleX(0.9653);">8</span>
<span class="t" style="left:1319.64px;top:771.20px;font-size:22.79px;color:#1c2b34;-webkit-text-stroke:0.35px #1c2b34;transform:scaleX(0.9653);">10</span>
<span class="t" style="left:1319.64px;top:708.00px;font-size:22.79px;color:#1c2b34;-webkit-text-stroke:0.35px #1c2b34;transform:scaleX(0.9653);">12</span>
<span class="t" style="left:1380.36px;top:1113.00px;font-size:22.79px;color:#1c2b34;-webkit-text-stroke:0.35px #1c2b34;transform:scaleX(0.9556);">12:00</span>
<span class="t" style="left:1604.61px;top:1113.00px;font-size:22.79px;color:#1c2b34;-webkit-text-stroke:0.35px #1c2b34;transform:scaleX(0.9556);">Nov 17</span>
<span class="t" style="left:1843.36px;top:1113.00px;font-size:22.79px;color:#1c2b34;-webkit-text-stroke:0.35px #1c2b34;transform:scaleX(0.9556);">12:00</span>
<span class="t" style="left:2065.79px;top:1113.00px;font-size:22.79px;color:#1c2b34;-webkit-text-stroke:0.35px #1c2b34;transform:scaleX(0.9556);">Mon 18</span>
<div class="a" style="left:1330.3px;top:1173px;width:24px;height:24px;background:#3598ec;border-radius:5px;"></div>
<span class="t" style="left:1368.60px;top:1171.50px;font-size:25.9px;color:#1c2b34;-webkit-text-stroke:0.35px #1c2b34;transform:scaleX(0.9579);">gke-dev-gke-sh...</span>
<div class="a" style="left:1608.6px;top:1173px;width:24px;height:24px;background:#5a48c0;border-radius:5px;"></div>
<span class="t" style="left:1646.60px;top:1171.50px;font-size:25.9px;color:#1c2b34;-webkit-text-stroke:0.35px #1c2b34;transform:scaleX(0.9579);">gke-dev-gke-sh...</span>
<div class="a" style="left:1886.4px;top:1173px;width:24px;height:24px;background:#ecbd27;border-radius:5px;"></div>
<span class="t" style="left:1924.60px;top:1171.50px;font-size:25.9px;color:#1c2b34;-webkit-text-stroke:0.35px #1c2b34;transform:scaleX(0.9798);">gke-prod-gke-bi...</span>
<div class="a" style="left:2158.5px;top:1162px;width:71px;height:43px;background:#fff;border:2px solid #c3c7de;border-radius:8px;"></div>
<span class="t" style="left:2174.00px;top:1171.50px;font-size:25.9px;color:#1c2b34;-webkit-text-stroke:0.35px #1c2b34;transform:scaleX(0.9107);">+25</span>
<svg class="a" style="left:0px;top:0px;pointer-events:none;" width="3442" height="1864" viewBox="0 0 3442 1864"><path d="M1352.4 1035.3 H2277.5" stroke="#dfe0e5" stroke-width="1.4"/><path d="M1352.4 972.1 H2277.5" stroke="#dfe0e5" stroke-width="1.4"/><path d="M1352.4 908.9 H2277.5" stroke="#dfe0e5" stroke-width="1.4"/><path d="M1352.4 845.7 H2277.5" stroke="#dfe0e5" stroke-width="1.4"/><path d="M1352.4 782.5 H2277.5" stroke="#dfe0e5" stroke-width="1.4"/><path d="M1352.4 719.3 H2277.5" stroke="#dfe0e5" stroke-width="1.4"/><path d="M1352.4 687.7 V1098.5" stroke="#c9cad0" stroke-width="1.4"/><polyline points="1352.4,1019.5 1386.0,1021.1 1503.0,1022.7 1619.0,1019.5 1734.5,1021.1 1850.5,1022.7 1965.9,1021.1 2081.9,1022.7 2197.9,1019.5" fill="none" stroke="#3598ec" stroke-width="4" stroke-linejoin="round"/><polyline points="1352.4,1016.3 1386.0,1016.3 1503.0,1017.9 1619.0,1016.3 1734.5,1016.3 1850.5,1016.3 1965.9,1017.9 2081.9,1016.3 2197.9,1014.8" fill="none" stroke="#7ba8f6" stroke-width="4" stroke-linejoin="round"/><polyline points="1352.4,1025.8 1386.0,1025.8 1503.0,1027.4 1619.0,1025.8 1734.5,1025.8 1850.5,1025.8 1965.9,1025.8 2081.9,1025.8 2197.9,1024.2" fill="none" stroke="#a88bf5" stroke-width="4" stroke-linejoin="round"/><polyline points="1352.4,1011.6 1386.0,1010.0 1503.0,1013.2 1619.0,1014.8 1734.5,1013.2 1850.5,1016.3 1965.9,1019.5 2081.9,1022.7 2197.9,1016.3" fill="none" stroke="#5a48c0" stroke-width="4" stroke-linejoin="round"/><polyline points="1352.4,1000.5 1386.0,986.3 1503.0,1033.7 1619.0,1019.5 1734.5,1035.3 1850.5,987.9 1965.9,1017.9 2081.9,1019.5 2197.9,1043.2" fill="none" stroke="#3598ec" stroke-width="4" stroke-linejoin="round"/><polyline points="1352.4,1006.9 1386.0,1006.9 1503.0,1019.5 1619.0,1024.2 1734.5,1051.1 1850.5,1032.8 1965.9,1032.1 2081.9,1029.0 2197.9,1010.0" fill="none" stroke="#7ba8f6" stroke-width="4" stroke-linejoin="round"/><polyline points="1352.4,1006.9 1386.0,1006.9 1503.0,1016.3 1619.0,1048.9 1734.5,1006.9 1850.5,1016.3 1965.9,1049.8 2081.9,991.1 2197.9,1006.9" fill="none" stroke="#a88bf5" stroke-width="4" stroke-linejoin="round"/><polyline points="1352.4,1003.7 1386.0,1003.7 1503.0,1010.0 1619.0,1006.9 1734.5,1010.0 1850.5,1013.2 1965.9,1013.2 2081.9,1019.5 2197.9,1003.7" fill="none" stroke="#7ba8f6" stroke-width="4" stroke-linejoin="round"/><polyline points="1352.4,1005.3 1386.0,1005.3 1503.0,1006.9 1619.0,1006.9 1734.5,1005.3 1850.5,1005.3 1965.9,1006.9 2081.9,1008.4 2197.9,1006.9" fill="none" stroke="#ecbd27" stroke-width="4" stroke-linejoin="round"/><polyline points="1352.4,999.0 1386.0,997.4 1503.0,1002.1 1619.0,1003.7 1734.5,1000.5 1850.5,1000.5 1965.9,1002.1 2081.9,1000.5 2197.9,997.4" fill="none" stroke="#f6d468" stroke-width="4" stroke-linejoin="round"/><polyline points="1352.4,1013.2 1386.0,1013.2 1503.0,1016.3 1619.0,1014.8 1734.5,1013.2 1850.5,1016.3 1965.9,1014.8 2081.9,1016.3 2197.9,1011.6" fill="none" stroke="#3598ec" stroke-width="4" stroke-linejoin="round"/><polyline points="1352.4,1021.1 1386.0,1022.7 1503.0,1022.7 1619.0,1021.1 1734.5,1022.7 1850.5,1021.1 1965.9,1022.7 2081.9,1021.1 2197.9,1019.5" fill="none" stroke="#7ba8f6" stroke-width="4" stroke-linejoin="round"/><polyline points="1352.4,1024.2 1386.0,1024.2 1503.0,1024.2 1619.0,1022.7 1734.5,1024.2 1850.5,1024.2 1965.9,1025.8 2081.9,1025.8 2197.9,1024.2" fill="none" stroke="#a88bf5" stroke-width="4" stroke-linejoin="round"/><polyline points="1352.4,957.9 1386.0,956.3 1503.0,1013.2 1619.0,1003.7 1734.5,997.4 1850.5,1016.3 1965.9,1022.7 2081.9,1036.9 2197.9,1038.5" fill="none" stroke="#5a48c0" stroke-width="4" stroke-linejoin="round"/><polyline points="1352.4,945.2 1386.0,935.8 1503.0,1003.7 1619.0,1002.1 1734.5,968.9 1850.5,957.9 1965.9,1000.5 2081.9,1016.3 2197.9,1006.9" fill="none" stroke="#ecbd27" stroke-width="4" stroke-linejoin="round"/><polyline points="1352.4,937.3 1386.0,932.6 1503.0,991.1 1619.0,1002.1 1734.5,956.3 1850.5,937.3 1965.9,1002.1 2081.9,983.2 2197.9,986.3" fill="none" stroke="#5a48c0" stroke-width="4" stroke-linejoin="round"/><polyline points="1352.4,920.0 1386.0,915.2 1503.0,981.6 1619.0,1003.7 1734.5,948.4 1850.5,923.8 1965.9,1002.1 2081.9,1000.5 2197.9,935.8" fill="none" stroke="#a88bf5" stroke-width="4" stroke-linejoin="round"/><polyline points="1352.4,915.2 1386.0,912.1 1503.0,980.0 1619.0,975.3 1734.5,934.2 1850.5,899.4 1965.9,983.2 2081.9,980.0 2197.9,927.9" fill="none" stroke="#a88bf5" stroke-width="4" stroke-linejoin="round"/><polyline points="1352.4,897.8 1386.0,893.1 1503.0,994.2 1619.0,1003.7 1734.5,968.9 1850.5,973.7 1965.9,1003.7 2081.9,1010.0 2197.9,1003.7" fill="none" stroke="#7ba8f6" stroke-width="4" stroke-linejoin="round"/><polyline points="1352.4,886.8 1386.0,878.9 1503.0,956.3 1619.0,961.0 1734.5,931.0 1850.5,883.6 1965.9,968.9 2081.9,972.1 2197.9,924.7" fill="none" stroke="#ecbd27" stroke-width="4" stroke-linejoin="round"/><polyline points="1352.4,889.9 1386.0,885.2 1503.0,957.9 1619.0,975.3 1734.5,912.1 1850.5,849.5 1965.9,967.4 2081.9,965.8 2197.9,920.6" fill="none" stroke="#7ba8f6" stroke-width="4" stroke-linejoin="round"/><polyline points="1352.4,828.0 1386.0,828.0 1503.0,953.8 1619.0,976.8 1734.5,999.0 1850.5,859.3 1965.9,925.6 2081.9,1041.6 2197.9,875.7" fill="none" stroke="#5a48c0" stroke-width="4" stroke-linejoin="round"/><polyline points="1352.4,828.0 1386.0,780.3 1503.0,1001.2 1619.0,1002.4 1734.5,864.0 1850.5,988.8 1965.9,964.5 2081.9,976.8 2197.9,926.6" fill="none" stroke="#ecbd27" stroke-width="4" stroke-linejoin="round"/><polyline points="1352.4,997.4 1386.0,995.8 1503.0,1000.5 1619.0,1002.1 1734.5,1000.5 1850.5,999.0 1965.9,1002.1 2081.9,1000.5 2197.9,994.2" fill="none" stroke="#ecbd27" stroke-width="4" stroke-linejoin="round"/><polyline points="1352.4,1011.6 1386.0,1008.4 1503.0,1011.6 1619.0,1005.3 1734.5,997.4 1850.5,1006.9 1965.9,1002.1 2081.9,984.7 2197.9,1000.5" fill="none" stroke="#5a48c0" stroke-width="4" stroke-linejoin="round"/><path d="M1351.6 1099.0 H2277.5" stroke="#5c6370" stroke-width="2.4"/><path d="M1407.6 1099.0 V1107.5" stroke="#5c6370" stroke-width="1.8"/><path d="M1639.1 1099.0 V1107.5" stroke="#5c6370" stroke-width="1.8"/><path d="M1870.6 1099.0 V1107.5" stroke="#5c6370" stroke-width="1.8"/><path d="M2102.1 1099.0 V1107.5" stroke="#5c6370" stroke-width="1.8"/></svg>
<span class="t" style="left:2354.40px;top:599.50px;font-size:29.01px;color:#1c2b34;-webkit-text-stroke:0.35px #1c2b34;transform:scaleX(0.9781);">% Failures</span>
<svg class="a" style="left:2748.4px;top:608.5px;" width="21" height="12" viewBox="0 0 21 12"><path d="M0.3 0.3 H20.7 L10.5 11.5 Z" fill="#70757a"/></svg>
<svg class="a" style="left:3117.4px;top:597px;" width="38" height="32" viewBox="0 0 38 32"><g fill="none" stroke="#70757a" stroke-width="2.7"><path d="M2.5 16.5 C9 5 28 5 35.5 16.5 C28 28 9 28 2.5 16.5 Z"/><circle cx="19" cy="16.5" r="6.6"/><path d="M8.2 32.6 L35.2 4.6" stroke="#fff" stroke-width="3.2"/><path d="M5.5 30.8 L32.5 2.8" stroke-width="3"/></g></svg>
<svg class="a" style="left:3182.4px;top:595px;" width="34" height="34" viewBox="0 0 34 34"><g fill="none" stroke="#70757a" stroke-width="2.7" stroke-linejoin="round"><path d="M3 24 L22.5 3.5 Q24 2 25.6 3.5 L29.5 7.2 Q31 8.8 29.5 10.4 L10 31 H3 Z"/><path d="M20 6.5 L27 13.5"/><path d="M15.5 31 H32"/></g></svg>
<svg class="a" style="left:3243.4px;top:595px;" width="32" height="34" viewBox="0 0 32 34"><g fill="none" stroke="#70757a" stroke-width="2.7"><path d="M16 22 V3.5"/><path d="M7.5 11 L16 2.8 L24.5 11"/><path d="M2.4 18.5 V31 H29.6 V18.5"/></g></svg>
<svg class="a" style="left:3306.4px;top:598px;" width="30" height="30" viewBox="0 0 30 30"><g fill="none" stroke="#70757a" stroke-width="2.7"><path d="M2 10.5 V2 H10.5 M2.5 2.5 L11.5 11.5"/><path d="M28 10.5 V2 H19.5 M27.5 2.5 L18.5 11.5"/><path d="M2 19.5 V28 H10.5 M2.5 27.5 L11.5 18.5"/><path d="M28 19.5 V28 H19.5 M27.5 27.5 L18.5 18.5"/></g></svg>
<div class="a" style="left:2324.4px;top:651.8px;width:1036px;height:2px;background:#e3e4ee;"></div>
<span class="t" style="left:2307.64px;top:903.11px;font-size:22.79px;color:#9b9fa4;-webkit-text-stroke:0.35px #9b9fa4;transform:rotate(-90deg) scaleX(0.9680);transform-origin:50% 50%;">Percent</span>
<span class="t" style="left:2403.27px;top:1087.20px;font-size:22.79px;color:#1c2b34;-webkit-text-stroke:0.35px #1c2b34;transform:scaleX(0.9653);">0</span>
<span class="t" style="left:2391.04px;top:1012.64px;font-size:22.79px;color:#1c2b34;-webkit-text-stroke:0.35px #1c2b34;transform:scaleX(0.9653);">20</span>
<span class="t" style="left:2391.04px;top:938.08px;font-size:22.79px;color:#1c2b34;-webkit-text-stroke:0.35px #1c2b34;transform:scaleX(0.9653);">40</span>
<span class="t" style="left:2391.04px;top:863.52px;font-size:22.79px;color:#1c2b34;-webkit-text-stroke:0.35px #1c2b34;transform:scaleX(0.9653);">60</span>
<span class="t" style="left:2391.04px;top:788.96px;font-size:22.79px;color:#1c2b34;-webkit-text-stroke:0.35px #1c2b34;transform:scaleX(0.9653);">80</span>
<span class="t" style="left:2378.81px;top:714.40px;font-size:22.79px;color:#1c2b34;-webkit-text-stroke:0.35px #1c2b34;transform:scaleX(0.9653);">100</span>
<span class="t" style="left:2451.76px;top:1113.00px;font-size:22.79px;color:#1c2b34;-webkit-text-stroke:0.35px #1c2b34;transform:scaleX(0.9556);">12:00</span>
<span class="t" style="left:2676.01px;top:1113.00px;font-size:22.79px;color:#1c2b34;-webkit-text-stroke:0.35px #1c2b34;transform:scaleX(0.9556);">Nov 17</span>
<span class="t" style="left:2914.76px;top:1113.00px;font-size:22.79px;color:#1c2b34;-webkit-text-stroke:0.35px #1c2b34;transform:scaleX(0.9556);">12:00</span>
<span class="t" style="left:3137.19px;top:1113.00px;font-size:22.79px;color:#1c2b34;-webkit-text-stroke:0.35px #1c2b34;transform:scaleX(0.9556);">Mon 18</span>
<div class="a" style="left:2401.7px;top:1173px;width:24px;height:24px;background:#8e0a0a;border-radius:5px;"></div>
<span class="t" style="left:2440.00px;top:1171.50px;font-size:25.9px;color:#1c2b34;-webkit-text-stroke:0.35px #1c2b34;transform:scaleX(0.9579);">gke-dev-gke-sh...</span>
<div class="a" style="left:2680px;top:1173px;width:24px;height:24px;background:#a00c0c;border-radius:5px;"></div>
<span class="t" style="left:2718.00px;top:1171.50px;font-size:25.9px;color:#1c2b34;-webkit-text-stroke:0.35px #1c2b34;transform:scaleX(0.9579);">gke-dev-gke-sh...</span>
<div class="a" style="left:2957.8px;top:1173px;width:24px;height:24px;background:#b00f10;border-radius:5px;"></div>
<span class="t" style="left:2996.00px;top:1171.50px;font-size:25.9px;color:#1c2b34;-webkit-text-stroke:0.35px #1c2b34;transform:scaleX(0.9798);">gke-prod-gke-bi...</span>
<div class="a" style="left:3229.9px;top:1162px;width:71px;height:43px;background:#fff;border:2px solid #c3c7de;border-radius:8px;"></div>
<span class="t" style="left:3245.40px;top:1171.50px;font-size:25.9px;color:#1c2b34;-webkit-text-stroke:0.35px #1c2b34;transform:scaleX(0.9107);">+25</span>
<svg class="a" style="left:0px;top:0px;pointer-events:none;" width="3442" height="1864" viewBox="0 0 3442 1864"><path d="M2423.8 1023.9 H3348.9" stroke="#dfe0e5" stroke-width="1.4"/><path d="M2423.8 949.4 H3348.9" stroke="#dfe0e5" stroke-width="1.4"/><path d="M2423.8 874.8 H3348.9" stroke="#dfe0e5" stroke-width="1.4"/><path d="M2423.8 800.3 H3348.9" stroke="#dfe0e5" stroke-width="1.4"/><path d="M2423.8 725.7 H3348.9" stroke="#dfe0e5" stroke-width="1.4"/><path d="M2423.8 687.7 V1098.5" stroke="#c9cad0" stroke-width="1.4"/><polyline points="2423.8,1055.6 2457.4,1055.6 2573.9,1056.4 2689.9,1056.7 2805.9,1056.7 2921.9,1056.4 3037.8,1056.7 3153.8,1056.4 3269.8,1056.4" fill="none" stroke="#ffb4b6" stroke-width="4" stroke-linejoin="round"/><polyline points="2423.8,1053.8 2457.4,1054.5 2573.9,1055.3 2689.9,1055.6 2805.9,1055.6 2921.9,1055.6 3037.8,1055.6 3153.8,1055.3 3269.8,1055.3" fill="none" stroke="#fa9096" stroke-width="4" stroke-linejoin="round"/><polyline points="2423.8,1059.4 2457.4,1060.5 2573.9,1055.6 2689.9,1053.8 2805.9,1055.6 2921.9,1062.0 3037.8,1057.5 3153.8,1055.6 3269.8,1053.8" fill="none" stroke="#f5686f" stroke-width="4" stroke-linejoin="round"/><polyline points="2423.8,1051.9 2457.4,1052.6 2573.9,1053.8 2689.9,1054.5 2805.9,1054.5 2921.9,1055.6 3037.8,1053.8 3153.8,1053.0 3269.8,1052.3" fill="none" stroke="#fa9096" stroke-width="4" stroke-linejoin="round"/><polyline points="2423.8,1050.0 2457.4,1053.8 2573.9,1048.2 2689.9,1046.3 2805.9,1051.9 2921.9,1053.0 3037.8,1048.2 3153.8,1048.2 3269.8,1051.9" fill="none" stroke="#f5686f" stroke-width="4" stroke-linejoin="round"/><polyline points="2423.8,1046.3 2457.4,1050.0 2573.9,1033.3 2689.9,1033.3 2805.9,1051.9 2921.9,1055.6 3037.8,1038.9 3153.8,1038.9 3269.8,1040.7" fill="none" stroke="#f0505b" stroke-width="4" stroke-linejoin="round"/><polyline points="2423.8,1033.3 2457.4,1033.3 2573.9,1031.4 2689.9,1033.3 2805.9,1035.1 2921.9,1037.0 3037.8,1033.3 3153.8,1031.4 3269.8,1029.5" fill="none" stroke="#f5686f" stroke-width="4" stroke-linejoin="round"/><polyline points="2423.8,1042.6 2457.4,1046.3 2573.9,1029.5 2689.9,1033.3 2805.9,1042.6 2921.9,1051.9 3037.8,1031.4 3153.8,1029.5 3269.8,1042.6" fill="none" stroke="#f0505b" stroke-width="4" stroke-linejoin="round"/><polyline points="2423.8,1053.8 2457.4,1053.8 2573.9,1027.7 2689.9,1029.5 2805.9,1042.6 2921.9,1055.6 3037.8,1033.3 3153.8,1027.7 3269.8,1025.8" fill="none" stroke="#fa9096" stroke-width="4" stroke-linejoin="round"/><polyline points="2423.8,1057.5 2457.4,1055.6 2573.9,1029.5 2689.9,1031.4 2805.9,1046.3 2921.9,1057.5 3037.8,1035.1 3153.8,1029.5 3269.8,1031.4" fill="none" stroke="#ffb4b6" stroke-width="4" stroke-linejoin="round"/><polyline points="2423.8,1040.7 2457.4,1042.6 2573.9,1021.3 2689.9,1027.7 2805.9,1038.9 2921.9,1040.7 3037.8,1012.8 3153.8,1002.3 3269.8,1005.3" fill="none" stroke="#f0505b" stroke-width="4" stroke-linejoin="round"/><polyline points="2423.8,1044.4 2457.4,1044.4 2573.9,1027.7 2689.9,1014.6 2805.9,1037.0 2921.9,1048.2 3037.8,1010.9 3153.8,982.9 3269.8,1003.4" fill="none" stroke="#f0505b" stroke-width="4" stroke-linejoin="round"/><polyline points="2423.8,994.1 2457.4,1000.5 2573.9,959.8 2689.9,972.9 2805.9,988.5 2921.9,1003.4 3037.8,955.7 3153.8,949.0 3269.8,969.9" fill="none" stroke="#ffb4b6" stroke-width="4" stroke-linejoin="round"/><polyline points="2423.8,870.3 2457.4,871.1 2573.9,870.3 2689.9,871.1 2805.9,870.3 2921.9,870.0 3037.8,870.0 3153.8,870.3 3269.8,868.1" fill="none" stroke="#dc2632" stroke-width="4" stroke-linejoin="round"/><polyline points="2423.8,869.2 2457.4,870.0 2573.9,868.9 2689.9,868.9 2805.9,869.2 2921.9,868.9 3037.8,868.5 3153.8,869.2 3269.8,868.5" fill="none" stroke="#f9868c" stroke-width="4" stroke-linejoin="round"/><polyline points="2423.8,820.0 2457.4,820.8 2573.9,821.9 2689.9,820.8 2805.9,821.9 2921.9,817.0 3037.8,818.2 3153.8,819.6 3269.8,800.3" fill="none" stroke="#dc2632" stroke-width="4" stroke-linejoin="round"/><polyline points="2423.8,807.7 2457.4,808.5 2573.9,807.7 2689.9,807.7 2805.9,807.0 2921.9,805.9 3037.8,807.7 3153.8,809.6 3269.8,798.4" fill="none" stroke="#8a0a0c" stroke-width="4" stroke-linejoin="round"/><polyline points="2423.8,798.4 2457.4,799.1 2573.9,798.4 2689.9,799.5 2805.9,798.0 2921.9,796.5 3037.8,798.4 3153.8,798.4 3269.8,797.7" fill="none" stroke="#dc2632" stroke-width="4" stroke-linejoin="round"/><polyline points="2423.8,792.8 2457.4,792.8 2573.9,795.4 2689.9,796.5 2805.9,794.3 2921.9,792.8 3037.8,792.8 3153.8,792.8 3269.8,794.7" fill="none" stroke="#c0151c" stroke-width="4" stroke-linejoin="round"/><polyline points="2423.8,789.1 2457.4,789.1 2573.9,790.6 2689.9,789.1 2805.9,789.1 2921.9,789.8 3037.8,789.1 3153.8,789.1 3269.8,789.1" fill="none" stroke="#dc2632" stroke-width="4" stroke-linejoin="round"/><polyline points="2423.8,786.1 2457.4,786.1 2573.9,787.2 2689.9,786.8 2805.9,785.3 2921.9,786.8 3037.8,785.3 3153.8,783.9 3269.8,787.6" fill="none" stroke="#c0151c" stroke-width="4" stroke-linejoin="round"/><polyline points="2423.8,795.8 2457.4,797.3 2573.9,798.8 2689.9,799.1 2805.9,797.7 2921.9,795.8 3037.8,794.7 3153.8,794.7 3269.8,796.5" fill="none" stroke="#dc2632" stroke-width="4" stroke-linejoin="round"/><path d="M2423.0 1099.0 H3348.9" stroke="#5c6370" stroke-width="2.4"/><path d="M2479.0 1099.0 V1107.5" stroke="#5c6370" stroke-width="1.8"/><path d="M2710.5 1099.0 V1107.5" stroke="#5c6370" stroke-width="1.8"/><path d="M2942.0 1099.0 V1107.5" stroke="#5c6370" stroke-width="1.8"/><path d="M3173.5 1099.0 V1107.5" stroke="#5c6370" stroke-width="1.8"/><circle cx="2689.9" cy="1097.5" r="2.6" fill="#c0151c"/><circle cx="2921.9" cy="1097.5" r="2.6" fill="#c0151c"/></svg>
<span class="t" style="left:145.50px;top:1288.80px;font-size:29.01px;color:#1c2b34;font-weight:700;">28 results found</span>
<div class="a" style="left:423px;top:1270.5px;width:236px;height:61px;background:#fff;border:2px solid #c3c7de;border-radius:8px;"></div>
<div class="a" style="left:517.6px;top:1272.5px;width:2px;height:57px;background:#c3c7de;"></div>
<span class="t" style="left:438.70px;top:1288.80px;font-size:29.01px;color:#6a737c;-webkit-text-stroke:0.35px #6a737c;transform:scaleX(1.0778);">Limit</span>
<span class="t" style="left:539.40px;top:1288.80px;font-size:29.01px;color:#1c2b34;-webkit-text-stroke:0.35px #1c2b34;transform:scaleX(0.9609);">100</span>
<svg class="a" style="left:620px;top:1297px;" width="21" height="12" viewBox="0 0 21 12"><path d="M0.3 0.3 H20.7 L10.5 11.5 Z" fill="#70757a"/></svg>
<div class="a" style="left:2254px;top:1273px;width:558px;height:56px;background:#f6f7fa;border-radius:8px;"></div>
<span class="t" style="left:2273.30px;top:1288.60px;font-size:29.01px;color:#1c2b34;-webkit-text-stroke:0.35px #1c2b34;transform:scaleX(1.0221);">Last updated: Mon, Nov 18, 9:10:03 am</span>
<svg class="a" style="left:2857.5px;top:1287.5px;" width="28.5" height="28.5" viewBox="0 0 31 31"><g fill="#6a737c"><path d="M15.5 0 L18.6 0.3 L19.4 4.2 L22.2 5.4 L25.5 3.2 L27.9 5.6 L25.7 8.9 L26.9 11.7 L30.8 12.5 L30.8 18.6 L26.9 19.4 L25.7 22.2 L27.9 25.5 L25.5 27.9 L22.2 25.7 L19.4 26.9 L18.6 30.8 L12.5 30.8 L11.7 26.9 L8.9 25.7 L5.6 27.9 L3.2 25.5 L5.4 22.2 L4.2 19.4 L0.3 18.6 L0.3 12.5 L4.2 11.7 L5.4 8.9 L3.2 5.6 L5.6 3.2 L8.9 5.4 L11.7 4.2 L12.5 0.3 Z M15.5 10 A5.5 5.5 0 1 0 15.6 10 Z" fill-rule="evenodd"/></g></svg>
<span class="t" style="left:2904.00px;top:1288.60px;font-size:29.01px;color:#6a737c;-webkit-text-stroke:0.35px #6a737c;transform:scaleX(1.0204);">Customize</span>
<div class="a" style="left:3086px;top:1270.5px;width:329px;height:61px;background:#fff;border:2px solid #c3c7de;border-radius:8px;"></div>
<svg class="a" style="left:3112px;top:1287px;" width="32" height="30" viewBox="0 0 32 30"><g fill="none" stroke="#70757a" stroke-width="2.7"><path d="M16 1 V19"/><path d="M8 12 L16 20 L24 12"/><path d="M2 16.5 V28 H30 V16.5"/></g></svg>
<span class="t" style="left:3161.00px;top:1288.60px;font-size:29.01px;color:#1c2b34;-webkit-text-stroke:0.35px #1c2b34;transform:scaleX(0.9773);">Download as CSV</span>
<div class="a" style="left:145px;top:1367px;width:3270px;height:507px;background:#fff;border:2px solid #e3e4ee;border-radius:8px 8px 0 0;"></div>
<div class="a" style="left:145px;top:1429px;width:3270px;height:2px;background:#e3e4ee;"></div>
<div class="a" style="left:807px;top:1369px;width:2px;height:61px;background:#e3e4ee;"></div>
<div class="a" style="left:1182px;top:1369px;width:2px;height:61px;background:#e3e4ee;"></div>
<div class="a" style="left:1672px;top:1369px;width:2px;height:61px;background:#e3e4ee;"></div>
<div class="a" style="left:2081px;top:1369px;width:2px;height:61px;background:#e3e4ee;"></div>
<div class="a" style="left:2400.5px;top:1369px;width:2px;height:61px;background:#e3e4ee;"></div>
<div class="a" style="left:2768.4px;top:1369px;width:2px;height:61px;background:#e3e4ee;"></div>
<div class="a" style="left:3107.4px;top:1369px;width:2px;height:61px;background:#e3e4ee;"></div>
<div class="a" style="left:145px;top:1500.8px;width:3270px;height:2px;background:#e3e4ee;"></div>
<div class="a" style="left:145px;top:1573.5px;width:3270px;height:2px;background:#e3e4ee;"></div>
<div class="a" style="left:145px;top:1646.3px;width:3270px;height:2px;background:#e3e4ee;"></div>
<div class="a" style="left:145px;top:1719px;width:3270px;height:2px;background:#e3e4ee;"></div>
<div class="a" style="left:145px;top:1791.7px;width:3270px;height:2px;background:#e3e4ee;"></div>
<div class="a" style="left:1673px;top:1367px;width:409px;height:64px;background:#0066c6;"></div>
<div class="a" style="left:2021px;top:1367px;width:2px;height:64px;background:#005bb3;"></div>
<span class="t" style="left:163.00px;top:1386.40px;font-size:26.94px;color:#1c2b34;font-weight:700;transform:scaleX(0.8932);">DNS SERVER</span>
<span class="t" style="left:949.30px;top:1386.40px;font-size:26.94px;color:#1c2b34;font-weight:700;transform:scaleX(0.9216);"># DNS REQUESTS</span>
<span class="t" style="left:1324.50px;top:1386.40px;font-size:26.94px;color:#1c2b34;font-weight:700;transform:scaleX(0.9294);"># DNS REQUESTS/SECOND</span>
<svg class="a" style="left:1756px;top:1381px;" width="28" height="32" viewBox="0 0 28 32"><g fill="none" stroke="#fff" stroke-width="2.8"><path d="M14 1 V29"/><path d="M2.5 18 L14 29.5 L25.5 18"/></g></svg>
<span class="t" style="left:1798.70px;top:1386.40px;font-size:26.94px;color:#fff;font-weight:700;transform:scaleX(0.9168);">RESPONSE TIME</span>
<svg class="a" style="left:2040px;top:1394px;" width="21" height="12" viewBox="0 0 21 12"><path d="M0.3 0.3 H20.7 L10.5 11.5 Z" fill="#a9d2f7"/></svg>
<span class="t" style="left:2221.70px;top:1386.40px;font-size:26.94px;color:#1c2b34;font-weight:700;transform:scaleX(0.9572);">% TIMEOUTS</span>
<span class="t" style="left:2543.30px;top:1386.40px;font-size:26.94px;color:#1c2b34;font-weight:700;transform:scaleX(0.8996);">% ERROR CODES</span>
<span class="t" style="left:2911.20px;top:1386.40px;font-size:26.94px;color:#1c2b34;font-weight:700;transform:scaleX(1.0040);">% NXDOMAIN</span>
<span class="t" style="left:3249.70px;top:1386.40px;font-size:26.94px;color:#1c2b34;font-weight:700;transform:scaleX(0.8994);">% SERVFAIL</span>
<span class="t" style="left:163.00px;top:1452.60px;font-size:29.01px;color:#1c2b34;-webkit-text-stroke:0.35px #1c2b34;transform:scaleX(1.0311);">kube-dns-55db747489-85nb5</span>
<span class="t" style="left:1082.54px;top:1452.60px;font-size:29.01px;color:#1c2b34;font-weight:700;transform:scaleX(1.0342);">20.6M</span>
<span class="t" style="left:1569.17px;top:1452.60px;font-size:29.01px;color:#1c2b34;font-weight:700;transform:scaleX(1.0083);">119.37</span>
<span class="t" style="left:1965.36px;top:1452.60px;font-size:29.01px;color:#1c2b34;font-weight:700;">99.4</span>
<span class="t" style="left:2029.50px;top:1454.60px;font-size:26.94px;color:#6a737c;-webkit-text-stroke:0.35px #6a737c;transform:scaleX(0.9381);">ms</span>
<span class="t" style="left:2303.61px;top:1452.60px;font-size:29.01px;color:#1c2b34;font-weight:700;transform:scaleX(0.9898);">0.79%</span>
<span class="t" style="left:2670.61px;top:1452.60px;font-size:29.01px;color:#1c2b34;font-weight:700;transform:scaleX(0.9898);">17.9%</span>
<span class="t" style="left:3008.61px;top:1452.60px;font-size:29.01px;color:#1c2b34;font-weight:700;transform:scaleX(0.9898);">17.9%</span>
<span class="t" style="left:3355.46px;top:1452.60px;font-size:29.01px;color:#1c2b34;font-weight:700;transform:scaleX(0.9670);">0%</span>
<span class="t" style="left:163.00px;top:1525.20px;font-size:29.01px;color:#1c2b34;-webkit-text-stroke:0.35px #1c2b34;transform:scaleX(1.0329);">kube-dns-55db747489-7wwfz</span>
<span class="t" style="left:1082.54px;top:1525.20px;font-size:29.01px;color:#1c2b34;font-weight:700;transform:scaleX(1.0342);">23.9M</span>
<span class="t" style="left:1567.56px;top:1525.20px;font-size:29.01px;color:#1c2b34;font-weight:700;transform:scaleX(1.0083);">138.19</span>
<span class="t" style="left:1965.36px;top:1525.20px;font-size:29.01px;color:#1c2b34;font-weight:700;">90.7</span>
<span class="t" style="left:2029.50px;top:1527.20px;font-size:26.94px;color:#6a737c;-webkit-text-stroke:0.35px #6a737c;transform:scaleX(0.9381);">ms</span>
<span class="t" style="left:2303.61px;top:1525.20px;font-size:29.01px;color:#1c2b34;font-weight:700;transform:scaleX(0.9898);">0.74%</span>
<span class="t" style="left:2670.61px;top:1525.20px;font-size:29.01px;color:#1c2b34;font-weight:700;transform:scaleX(0.9898);">16.8%</span>
<span class="t" style="left:3008.61px;top:1525.20px;font-size:29.01px;color:#1c2b34;font-weight:700;transform:scaleX(0.9898);">16.8%</span>
<span class="t" style="left:3355.46px;top:1525.20px;font-size:29.01px;color:#1c2b34;font-weight:700;transform:scaleX(0.9670);">0%</span>
<span class="t" style="left:163.00px;top:1597.80px;font-size:29.01px;color:#1c2b34;-webkit-text-stroke:0.35px #1c2b34;transform:scaleX(1.0320);">kube-dns-c9d84bc59-4kdwb</span>
<span class="t" style="left:1082.54px;top:1597.80px;font-size:29.01px;color:#1c2b34;font-weight:700;transform:scaleX(1.0342);">34.9M</span>
<span class="t" style="left:1567.56px;top:1597.80px;font-size:29.01px;color:#1c2b34;font-weight:700;transform:scaleX(1.0083);">201.69</span>
<span class="t" style="left:1965.36px;top:1597.80px;font-size:29.01px;color:#1c2b34;font-weight:700;">71.1</span>
<span class="t" style="left:2029.50px;top:1599.80px;font-size:26.94px;color:#6a737c;-webkit-text-stroke:0.35px #6a737c;transform:scaleX(0.9381);">ms</span>
<span class="t" style="left:2303.61px;top:1597.80px;font-size:29.01px;color:#1c2b34;font-weight:700;transform:scaleX(0.9898);">1.51%</span>
<span class="t" style="left:2670.61px;top:1597.80px;font-size:29.01px;color:#1c2b34;font-weight:700;transform:scaleX(0.9898);">13.4%</span>
<span class="t" style="left:3008.61px;top:1597.80px;font-size:29.01px;color:#1c2b34;font-weight:700;transform:scaleX(0.9898);">13.4%</span>
<span class="t" style="left:3355.46px;top:1597.80px;font-size:29.01px;color:#1c2b34;font-weight:700;transform:scaleX(0.9670);">0%</span>
<span class="t" style="left:163.00px;top:1670.40px;font-size:29.01px;color:#1c2b34;-webkit-text-stroke:0.35px #1c2b34;transform:scaleX(1.0215);">kube-dns-c9d84bc59-4pz6x</span>
<span class="t" style="left:1082.54px;top:1670.40px;font-size:29.01px;color:#1c2b34;font-weight:700;transform:scaleX(1.0342);">35.9M</span>
<span class="t" style="left:1567.56px;top:1670.40px;font-size:29.01px;color:#1c2b34;font-weight:700;transform:scaleX(1.0083);">207.59</span>
<span class="t" style="left:1965.36px;top:1670.40px;font-size:29.01px;color:#1c2b34;font-weight:700;">66.5</span>
<span class="t" style="left:2029.50px;top:1672.40px;font-size:26.94px;color:#6a737c;-webkit-text-stroke:0.35px #6a737c;transform:scaleX(0.9381);">ms</span>
<span class="t" style="left:2303.61px;top:1670.40px;font-size:29.01px;color:#1c2b34;font-weight:700;transform:scaleX(0.9898);">1.79%</span>
<span class="t" style="left:2670.61px;top:1670.40px;font-size:29.01px;color:#1c2b34;font-weight:700;transform:scaleX(0.9898);">13.0%</span>
<span class="t" style="left:3008.61px;top:1670.40px;font-size:29.01px;color:#1c2b34;font-weight:700;transform:scaleX(0.9898);">13.0%</span>
<span class="t" style="left:3355.46px;top:1670.40px;font-size:29.01px;color:#1c2b34;font-weight:700;transform:scaleX(0.9670);">0%</span>
<span class="t" style="left:163.00px;top:1743.00px;font-size:29.01px;color:#1c2b34;-webkit-text-stroke:0.35px #1c2b34;transform:scaleX(1.0480);">kube-dns-6dbbbb649f-jrgz2</span>
<span class="t" style="left:1082.54px;top:1743.00px;font-size:29.01px;color:#1c2b34;font-weight:700;transform:scaleX(1.0342);">51.8M</span>
<span class="t" style="left:1567.56px;top:1743.00px;font-size:29.01px;color:#1c2b34;font-weight:700;transform:scaleX(1.0083);">299.70</span>
<span class="t" style="left:1965.36px;top:1743.00px;font-size:29.01px;color:#1c2b34;font-weight:700;">51.7</span>
<span class="t" style="left:2029.50px;top:1745.00px;font-size:26.94px;color:#6a737c;-webkit-text-stroke:0.35px #6a737c;transform:scaleX(0.9381);">ms</span>
<span class="t" style="left:2303.61px;top:1743.00px;font-size:29.01px;color:#1c2b34;font-weight:700;transform:scaleX(0.9898);">2.14%</span>
<span class="t" style="left:2670.61px;top:1743.00px;font-size:29.01px;color:#1c2b34;font-weight:700;transform:scaleX(0.9898);">9.48%</span>
<span class="t" style="left:3008.61px;top:1743.00px;font-size:29.01px;color:#1c2b34;font-weight:700;transform:scaleX(0.9898);">9.48%</span>
<span class="t" style="left:3355.46px;top:1743.00px;font-size:29.01px;color:#1c2b34;font-weight:700;transform:scaleX(0.9670);">0%</span>
<span class="t" style="left:163.00px;top:1815.60px;font-size:29.01px;color:#1c2b34;-webkit-text-stroke:0.35px #1c2b34;transform:scaleX(1.0450);">kube-dns-5f9845b6bf-pgwjs</span>
<span class="t" style="left:1082.54px;top:1815.60px;font-size:29.01px;color:#1c2b34;font-weight:700;transform:scaleX(1.0342);">56.9M</span>
<span class="t" style="left:1567.56px;top:1815.60px;font-size:29.01px;color:#1c2b34;font-weight:700;transform:scaleX(1.0083);">329.57</span>
<span class="t" style="left:1965.36px;top:1815.60px;font-size:29.01px;color:#1c2b34;font-weight:700;">48.6</span>
<span class="t" style="left:2029.50px;top:1817.60px;font-size:26.94px;color:#6a737c;-webkit-text-stroke:0.35px #6a737c;transform:scaleX(0.9381);">ms</span>
<span class="t" style="left:2303.61px;top:1815.60px;font-size:29.01px;color:#1c2b34;font-weight:700;transform:scaleX(0.9898);">1.81%</span>
<span class="t" style="left:2670.61px;top:1815.60px;font-size:29.01px;color:#1c2b34;font-weight:700;transform:scaleX(0.9898);">13.5%</span>
<span class="t" style="left:3008.61px;top:1815.60px;font-size:29.01px;color:#1c2b34;font-weight:700;transform:scaleX(0.9898);">13.5%</span>
<span class="t" style="left:3355.46px;top:1815.60px;font-size:29.01px;color:#1c2b34;font-weight:700;transform:scaleX(0.9670);">0%</span>
<div class="a" style="left:1546px;top:1255px;width:660px;height:92px;background:#47484b;border-radius:8px;"></div>
<svg class="a" style="left:1861px;top:1346px;" width="28" height="16" viewBox="0 0 28 16"><path d="M0 0 H28 L14 15 Z" fill="#47484b"/></svg>
<span class="t" style="left:1566.90px;top:1270.50px;font-size:26.94px;color:#fff;-webkit-text-stroke:0.35px #fff;transform:scaleX(1.0254);">Average response time of DNS server to a request</span>
<span class="t" style="left:1785.30px;top:1307.40px;font-size:26.94px;color:#fff;-webkit-text-stroke:0.35px #fff;transform:scaleX(1.0698);">from the client</span>
</body></html>
